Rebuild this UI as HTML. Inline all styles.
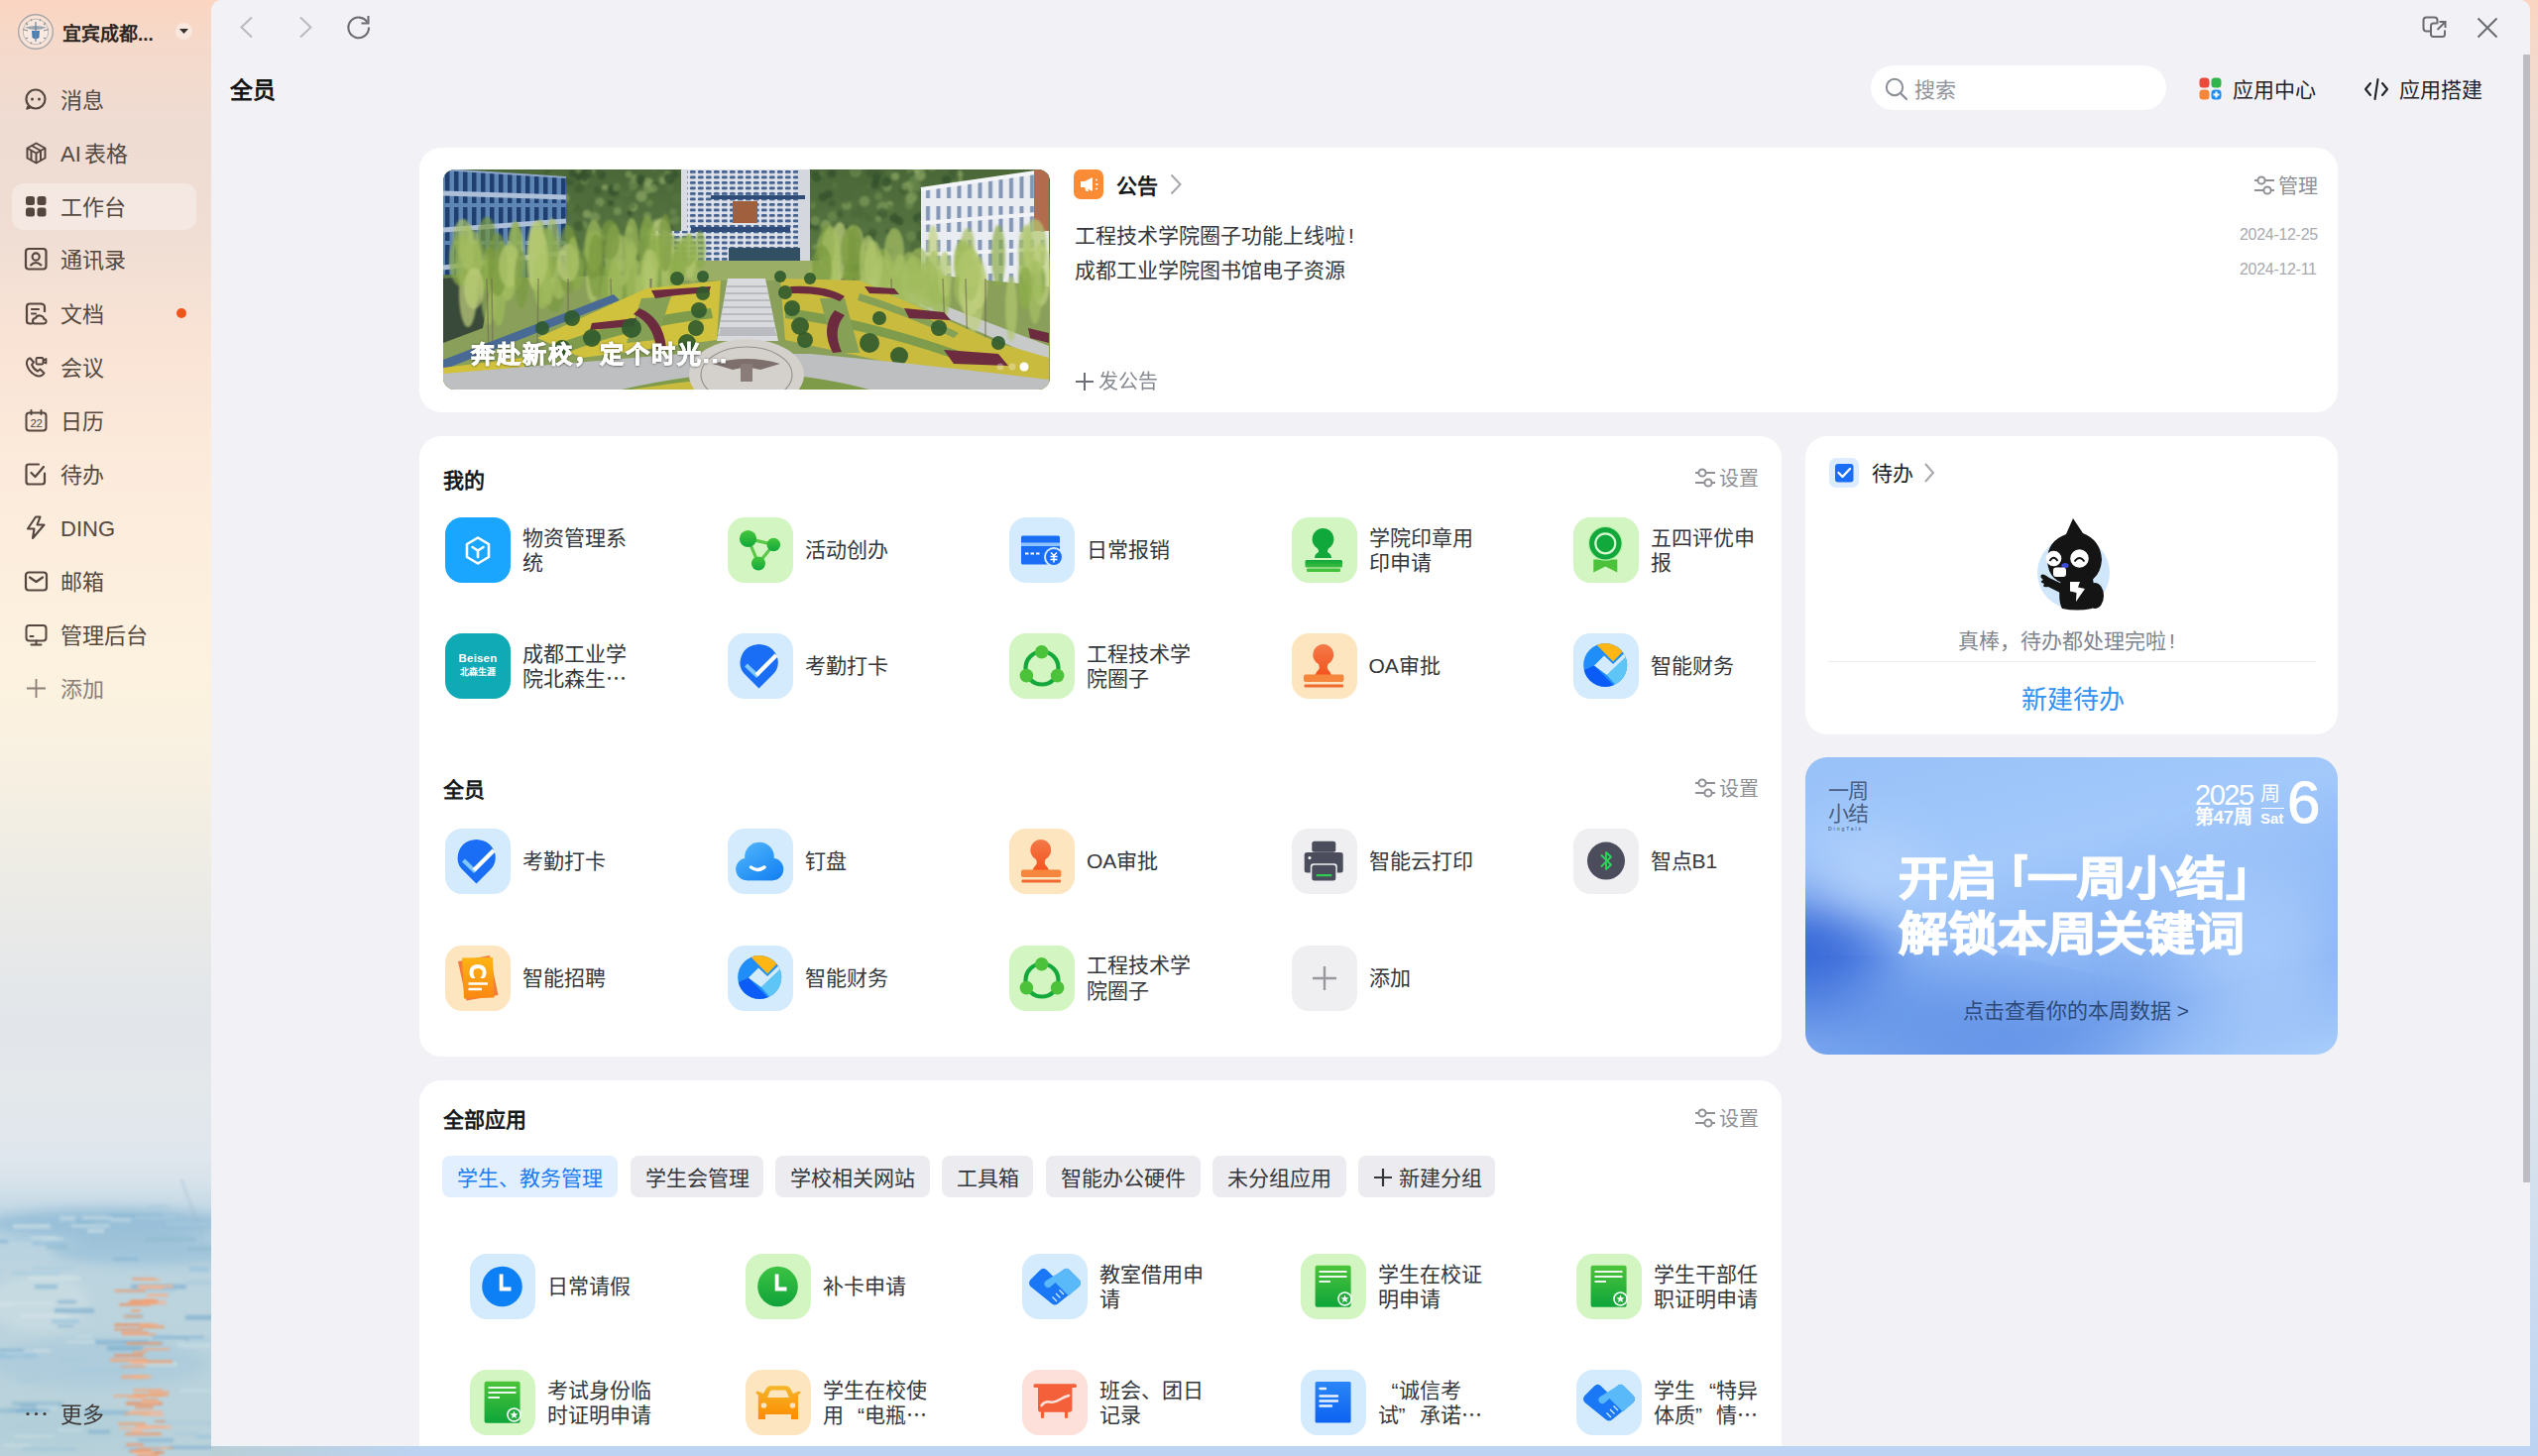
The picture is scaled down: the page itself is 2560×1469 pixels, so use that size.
<!DOCTYPE html>
<html lang="zh-CN">
<head>
<meta charset="utf-8">
<style>
*{box-sizing:border-box;margin:0;padding:0}
html,body{width:2560px;height:1469px;overflow:hidden}
body{font-family:"Liberation Sans",sans-serif;color:#1f2329;position:relative;background:#c3d6f4}
.abs{position:absolute}
#wall{position:absolute;left:0;top:0;width:2560px;height:1469px;background:linear-gradient(180deg,#fbd5c1 0px,#f5d9ca 45px,#eedcd3 130px,#f0ded4 240px,#f9e3d5 340px,#fcebdc 480px,#fdf2df 680px,#f7f0e2 780px,#eeece5 870px,#e6e8e9 970px,#dee4eb 1090px,#d4e0ee 1200px,#bcd3f3 1469px)}
#side{position:absolute;left:0;top:0;width:213px;height:1469px}
.nav{position:absolute;left:24px;height:30px;font-size:22px;line-height:30px;color:#55493f;white-space:nowrap}
.nav svg{position:absolute;left:0;top:1px}
.nav span{position:absolute;left:37px;top:0}
#main{position:absolute;left:213px;top:0;width:2339px;height:1459px;background:#f2f2f6;border-radius:10px 10px 0 0;overflow:hidden}
.card{position:absolute;background:#fff;border-radius:22px}
.t{position:absolute;white-space:nowrap}
.app{position:absolute;width:270px;height:66px}
.ic{position:absolute;left:0;top:0;width:66px;height:66px;border-radius:17px;overflow:hidden}
.ic svg{position:absolute;left:0;top:0}
.lb{position:absolute;left:78px;top:0;height:66px;width:130px;display:flex;align-items:center;font-size:21px;line-height:25.5px;color:#34373c}
.ell{letter-spacing:0}
.ql{display:inline-block;width:1em;text-align:right}
.qr{display:inline-block;width:1em;text-align:left}
.tab{position:absolute;top:1166px;height:42px;border-radius:8px;background:#ececf0;font-size:21px;line-height:46px;color:#34373c;text-align:center}
</style>
</head>
<body>
<div id="wall"></div>

<div id="side">
 <!-- logo -->
 <svg class="abs" style="left:17px;top:13px" width="38" height="38" viewBox="0 0 38 38">
  <circle cx="19" cy="19" r="17.3" fill="rgba(255,255,255,0.28)" stroke="#a9a7a8" stroke-width="1.4"/>
  <circle cx="19" cy="19" r="12.8" fill="rgba(255,255,255,0.25)" stroke="#bdb8b8" stroke-width="1"/>
  <path d="M6 16.5 L11 18 M27 18 L32 16.5 M9 10 L11 12 M29 10 L27 12 M14 6.5 L15 8 M24 6.5 L23 8 M9 26 L11 25 M29 26 L27 25 M14 31 L15 29.5 M24 31 L23 29.5" stroke="#8d8a8c" stroke-width="1.3"/>
  <path d="M8 14.5 Q19 11.5 30 14.5 Q25 17 19 17 Q13 17 8 14.5Z" fill="#9ba6b0"/>
  <path d="M15 18 L23 18 L22.5 25 Q19 27.5 15.5 25 Z" fill="#4a7fb6"/>
  <path d="M19 9 L19 29" stroke="#6d8aa6" stroke-width="1.3"/>
 </svg>
 <div class="t" style="left:63px;top:22px;font-size:19px;line-height:26px;font-weight:bold;color:#2c2420">宜宾成都...</div>
 <div class="abs" style="left:177px;top:23px;width:17px;height:17px;border-radius:50%;background:rgba(255,255,255,0.4)"></div>
 <svg class="abs" style="left:180px;top:28px" width="11" height="7" viewBox="0 0 11 7"><path d="M1 1 L10 1 L5.5 6Z" fill="#3a302b"/></svg>
 <div class="abs" style="left:12px;top:185px;width:186px;height:47px;border-radius:12px;background:rgba(255,255,255,0.32)"></div>
 <div class="nav" style="top:87px"><svg width="25" height="25" viewBox="0 0 25 25"><circle cx="12" cy="12" r="9.5" fill="none" stroke="#54463f" stroke-width="2.2"/><path d="M4 19 L3 22 L7 20.5" fill="#54463f" stroke="#54463f" stroke-width="1.5" stroke-linejoin="round"/><circle cx="8.5" cy="12" r="1.5" fill="#54463f"/><circle cx="15.5" cy="12" r="1.5" fill="#54463f"/></svg><span>消息</span></div>
 <div class="nav" style="top:141px"><svg width="25" height="25" viewBox="0 0 25 25"><path d="M12.5 2.5 L21.5 7.5 L21.5 17.5 L12.5 22.5 L3.5 17.5 L3.5 7.5 Z" fill="none" stroke="#54463f" stroke-width="2" stroke-linejoin="round"/><path d="M3.5 7.5 L12.5 12.5 L12.5 22.5 M12.5 12.5 L21.5 7.5 M8 5 L17 10 L17 20 M7.5 10 L7.5 20" fill="none" stroke="#54463f" stroke-width="2" stroke-linejoin="round"/></svg><span>AI<i style="font-style:normal;margin-left:3px">表格</i></span></div>
 <div class="nav" style="top:195px"><svg width="25" height="25" viewBox="0 0 25 25"><rect x="2" y="2" width="9" height="9" rx="2.5" fill="#54463f"/><rect x="13.5" y="2" width="9" height="9" rx="2.5" fill="#54463f"/><rect x="2" y="13.5" width="9" height="9" rx="2.5" fill="#54463f"/><rect x="13.5" y="13.5" width="9" height="9" rx="2.5" fill="#54463f"/></svg><span>工作台</span></div>
 <div class="nav" style="top:248px"><svg width="25" height="25" viewBox="0 0 25 25"><rect x="2" y="2" width="20.5" height="20.5" rx="3" fill="none" stroke="#54463f" stroke-width="2.2"/><circle cx="12.2" cy="10" r="3.6" fill="none" stroke="#54463f" stroke-width="2.1"/><path d="M6.5 19 Q12.2 13 18 19" fill="none" stroke="#54463f" stroke-width="2.1"/></svg><span>通讯录</span></div>
 <div class="nav" style="top:303px"><svg width="25" height="25" viewBox="0 0 25 25"><path d="M17 2.5 L6 2.5 Q3 2.5 3 5.5 L3 20 Q3 22.5 6 22.5 L8 22.5" fill="none" stroke="#54463f" stroke-width="2.2" stroke-linecap="round"/><path d="M17 2.5 Q21 2.5 21 6 L21 11" fill="none" stroke="#54463f" stroke-width="2.2"/><path d="M8 8 L15 8 M8 12.5 L12 12.5" stroke="#54463f" stroke-width="2.2" stroke-linecap="round"/><path d="M11 22.5 Q9 22.5 9 20 Q9 17 12 17 Q13 14 16.5 14.5 Q20 15 20.5 18 Q23 18.5 22.5 21 Q22 22.5 20 22.5 Z" fill="none" stroke="#54463f" stroke-width="2.1" stroke-linejoin="round"/></svg><span>文档</span></div>
 <div class="nav" style="top:357px"><svg width="25" height="25" viewBox="0 0 25 25"><path d="M5.5 3.5 Q2.5 5.5 3 9.5 Q4.5 16.5 11.5 20.5 Q15.5 22.5 18.5 20.5 L20.5 18.5 L16.5 14.5 L14 16.5 Q10 14.5 8 10 L10 7.5 L6.5 3.5 Z" fill="none" stroke="#54463f" stroke-width="2" stroke-linejoin="round"/><rect x="12.5" y="3" width="7" height="6.5" rx="1.2" fill="none" stroke="#54463f" stroke-width="1.9"/><path d="M19.5 5.5 L22.5 4 L22.5 8.5 L19.5 7" fill="none" stroke="#54463f" stroke-width="1.8" stroke-linejoin="round"/></svg><span>会议</span></div>
 <div class="nav" style="top:411px"><svg width="25" height="25" viewBox="0 0 25 25"><rect x="2.5" y="4.5" width="20" height="18" rx="3" fill="none" stroke="#54463f" stroke-width="2"/><path d="M7.5 2 L7.5 6 M17.5 2 L17.5 6" stroke="#54463f" stroke-width="2" stroke-linecap="round"/><text x="12.5" y="19" font-size="11.5" font-family="Liberation Sans" text-anchor="middle" fill="#54463f" letter-spacing="-0.5">22</text></svg><span>日历</span></div>
 <div class="nav" style="top:465px"><svg width="25" height="25" viewBox="0 0 25 25"><path d="M21 11.5 L21 20 Q21 22.5 18.5 22.5 L5 22.5 Q2.5 22.5 2.5 20 L2.5 5 Q2.5 2.5 5 2.5 L15 2.5" fill="none" stroke="#54463f" stroke-width="2.2" stroke-linecap="round"/><path d="M7.5 11 L11.5 15 L20 5" fill="none" stroke="#54463f" stroke-width="2.2" stroke-linecap="round" stroke-linejoin="round"/></svg><span>待办</span></div>
 <div class="nav" style="top:519px"><svg width="25" height="25" viewBox="0 0 25 25"><path d="M12 1.5 L16.5 1.5 L13.5 9.5 L20.5 9.5 L9 23 L10.5 13.5 L4 13.5 Z" fill="none" stroke="#54463f" stroke-width="2.1" stroke-linejoin="round"/></svg><span>DING</span></div>
 <div class="nav" style="top:573px"><svg width="25" height="25" viewBox="0 0 25 25"><rect x="2" y="3.5" width="21" height="18" rx="3" fill="none" stroke="#54463f" stroke-width="2.2"/><path d="M6 8.5 L12.5 13 L19 8.5" fill="none" stroke="#54463f" stroke-width="2.2" stroke-linecap="round" stroke-linejoin="round"/></svg><span>邮箱</span></div>
 <div class="nav" style="top:627px"><svg width="25" height="25" viewBox="0 0 25 25"><rect x="2.5" y="3" width="20" height="15.5" rx="3" fill="none" stroke="#54463f" stroke-width="2"/><path d="M7.5 22.5 L17.5 22.5 M12.5 18.5 L12.5 22.5 M6.5 14 L9.5 14" stroke="#54463f" stroke-width="2" stroke-linecap="round"/></svg><span>管理后台</span></div>
 <div class="nav" style="top:681px;color:#8a7e77"><svg width="25" height="25" viewBox="0 0 25 25"><path d="M12.5 3 L12.5 22 M3 12.5 L22 12.5" stroke="#8a7e77" stroke-width="1.8"/></svg><span>添加</span></div>
 <div class="abs" style="left:178px;top:311px;width:10px;height:10px;border-radius:50%;background:#f2541d"></div>
 <div id="paint" class="abs" style="left:0;top:1040px;width:213px;height:429px;overflow:hidden">
  <svg width="213" height="429" viewBox="0 0 213 429"><defs><linearGradient id="pg" x1="0" y1="0" x2="0" y2="1"><stop offset="0" stop-color="#e8e9ea" stop-opacity="0"/><stop offset="0.12" stop-color="#e4e8eb"/><stop offset="0.3" stop-color="#dfe6ed"/><stop offset="0.36" stop-color="#d6e2ea"/><stop offset="0.45" stop-color="#b9d3e2"/><stop offset="0.62" stop-color="#bcd4de"/><stop offset="1" stop-color="#b8d1da"/></linearGradient><filter id="pb"><feGaussianBlur stdDeviation="1.6"/></filter><filter id="pb2"><feGaussianBlur stdDeviation="6"/></filter><filter id="pb1"><feGaussianBlur stdDeviation="0.9"/></filter></defs><rect width="213" height="429" fill="url(#pg)"/><g filter="url(#pb2)" opacity="0.75"><ellipse cx="110" cy="195" rx="120" ry="16" fill="#8fbad5"/><ellipse cx="150" cy="222" rx="100" ry="14" fill="#98c0d8"/><ellipse cx="40" cy="275" rx="50" ry="30" fill="#cadde3"/><ellipse cx="100" cy="335" rx="110" ry="25" fill="#aacadb"/><ellipse cx="60" cy="400" rx="80" ry="20" fill="#b0cfd9"/></g><path d="M183 150 L205 210" stroke="#9fb9cc" stroke-width="3" opacity="0.35" filter="url(#pb)"/><g filter="url(#pb)"><rect x="13" y="246" width="44" height="2.2" fill="#c6dde5" opacity="0.6"/><rect x="108" y="185" width="56" height="2.6" fill="#7fb0d2" opacity="0.6"/><rect x="-5" y="275" width="19" height="3.3" fill="#d2e3e6" opacity="0.6"/><rect x="188" y="310" width="43" height="3.7" fill="#7fb0d2" opacity="0.6"/><rect x="67" y="313" width="59" height="2.1" fill="#d2e3e6" opacity="0.6"/><rect x="72" y="195" width="39" height="3.7" fill="#c6dde5" opacity="0.6"/><rect x="20" y="376" width="41" height="3.9" fill="#6fa6cc" opacity="0.6"/><rect x="137" y="186" width="40" height="3.9" fill="#a5c9de" opacity="0.6"/><rect x="74" y="340" width="29" height="3.8" fill="#a5c9de" opacity="0.6"/><rect x="35" y="256" width="23" height="4.3" fill="#7fb0d2" opacity="0.6"/><rect x="96" y="312" width="54" height="4.2" fill="#6fa6cc" opacity="0.6"/><rect x="-4" y="321" width="38" height="2.5" fill="#6fa6cc" opacity="0.6"/><rect x="88" y="200" width="17" height="4.0" fill="#d2e3e6" opacity="0.6"/><rect x="154" y="308" width="52" height="3.0" fill="#6fa6cc" opacity="0.6"/><rect x="108" y="318" width="36" height="4.5" fill="#6fa6cc" opacity="0.6"/><rect x="126" y="286" width="18" height="4.1" fill="#8fb9cf" opacity="0.6"/><rect x="130" y="313" width="35" height="4.1" fill="#8fb9cf" opacity="0.6"/><rect x="187" y="252" width="31" height="3.8" fill="#a5c9de" opacity="0.6"/><rect x="149" y="176" width="21" height="2.7" fill="#a5c9de" opacity="0.6"/><rect x="89" y="403" width="22" height="3.2" fill="#6fa6cc" opacity="0.6"/><rect x="160" y="394" width="54" height="2.8" fill="#a5c9de" opacity="0.6"/><rect x="130" y="421" width="32" height="2.7" fill="#7fb0d2" opacity="0.6"/><rect x="31" y="207" width="26" height="3.5" fill="#c6dde5" opacity="0.6"/><rect x="42" y="208" width="22" height="3.6" fill="#c6dde5" opacity="0.6"/><rect x="190" y="310" width="46" height="3.5" fill="#c6dde5" opacity="0.6"/><rect x="143" y="334" width="36" height="4.6" fill="#d2e3e6" opacity="0.6"/><rect x="103" y="340" width="33" height="3.2" fill="#a5c9de" opacity="0.6"/><rect x="-6" y="328" width="18" height="2.6" fill="#93bfda" opacity="0.6"/><rect x="112" y="189" width="20" height="3.7" fill="#c6dde5" opacity="0.6"/><rect x="60" y="187" width="16" height="4.6" fill="#c6dde5" opacity="0.6"/><rect x="120" y="260" width="58" height="3.8" fill="#a5c9de" opacity="0.6"/><rect x="167" y="193" width="60" height="3.4" fill="#a5c9de" opacity="0.6"/><rect x="12" y="243" width="49" height="4.2" fill="#a5c9de" opacity="0.6"/><rect x="16" y="380" width="16" height="4.9" fill="#c6dde5" opacity="0.6"/><rect x="132" y="256" width="56" height="4.3" fill="#6fa6cc" opacity="0.6"/><rect x="170" y="419" width="46" height="2.8" fill="#6fa6cc" opacity="0.6"/><rect x="58" y="401" width="25" height="3.6" fill="#c6dde5" opacity="0.6"/><rect x="29" y="247" width="52" height="5.0" fill="#d2e3e6" opacity="0.6"/><rect x="33" y="212" width="33" height="4.4" fill="#93bfda" opacity="0.6"/><rect x="58" y="297" width="16" height="2.1" fill="#6fa6cc" opacity="0.6"/><rect x="23" y="285" width="42" height="3.0" fill="#d2e3e6" opacity="0.6"/><rect x="197" y="408" width="58" height="3.1" fill="#93bfda" opacity="0.6"/><rect x="83" y="187" width="30" height="3.4" fill="#c6dde5" opacity="0.6"/><rect x="85" y="383" width="44" height="4.4" fill="#7fb0d2" opacity="0.6"/><rect x="6" y="381" width="32" height="4.1" fill="#93bfda" opacity="0.6"/><rect x="19" y="287" width="51" height="3.0" fill="#d2e3e6" opacity="0.6"/><rect x="139" y="411" width="36" height="4.2" fill="#7fb0d2" opacity="0.6"/><rect x="17" y="352" width="21" height="2.5" fill="#a5c9de" opacity="0.6"/><rect x="12" y="374" width="52" height="4.9" fill="#8fb9cf" opacity="0.6"/><rect x="14" y="408" width="40" height="2.1" fill="#d2e3e6" opacity="0.6"/><rect x="123" y="417" width="39" height="4.8" fill="#a5c9de" opacity="0.6"/><rect x="23" y="421" width="54" height="2.1" fill="#93bfda" opacity="0.6"/><rect x="33" y="238" width="41" height="2.8" fill="#a5c9de" opacity="0.6"/><rect x="-7" y="381" width="48" height="4.7" fill="#8fb9cf" opacity="0.6"/><rect x="179" y="315" width="34" height="4.8" fill="#c6dde5" opacity="0.6"/><rect x="13" y="195" width="38" height="4.6" fill="#d2e3e6" opacity="0.6"/><rect x="-19" y="209" width="51" height="2.5" fill="#a5c9de" opacity="0.6"/><rect x="6" y="324" width="18" height="4.0" fill="#c6dde5" opacity="0.6"/><rect x="153" y="307" width="20" height="3.7" fill="#93bfda" opacity="0.6"/><rect x="-11" y="211" width="19" height="3.4" fill="#7fb0d2" opacity="0.6"/><rect x="181" y="361" width="35" height="3.8" fill="#c6dde5" opacity="0.6"/><rect x="24" y="321" width="27" height="3.5" fill="#d2e3e6" opacity="0.6"/><rect x="187" y="287" width="46" height="4.6" fill="#6fa6cc" opacity="0.6"/><rect x="176" y="405" width="24" height="3.3" fill="#a5c9de" opacity="0.6"/><rect x="77" y="192" width="18" height="2.7" fill="#7fb0d2" opacity="0.6"/><rect x="47" y="216" width="21" height="4.3" fill="#8fb9cf" opacity="0.6"/><rect x="61" y="331" width="26" height="2.4" fill="#a5c9de" opacity="0.6"/><rect x="190" y="218" width="33" height="3.5" fill="#8fb9cf" opacity="0.6"/><rect x="16" y="381" width="34" height="3.5" fill="#6fa6cc" opacity="0.6"/><rect x="58" y="272" width="19" height="3.1" fill="#6fa6cc" opacity="0.6"/><rect x="77" y="307" width="16" height="3.0" fill="#c6dde5" opacity="0.6"/><rect x="191" y="238" width="20" height="4.8" fill="#93bfda" opacity="0.6"/><rect x="3" y="417" width="27" height="2.1" fill="#d2e3e6" opacity="0.6"/><rect x="146" y="208" width="52" height="4.5" fill="#8fb9cf" opacity="0.6"/><rect x="37" y="377" width="22" height="4.8" fill="#c6dde5" opacity="0.6"/><rect x="52" y="291" width="28" height="4.4" fill="#93bfda" opacity="0.6"/><rect x="-4" y="273" width="57" height="3.9" fill="#d2e3e6" opacity="0.6"/><rect x="114" y="229" width="25" height="2.8" fill="#7fb0d2" opacity="0.6"/><rect x="55" y="280" width="40" height="4.8" fill="#6fa6cc" opacity="0.6"/><rect x="-10" y="325" width="47" height="4.8" fill="#93bfda" opacity="0.6"/></g><g filter="url(#pb1)"><rect x="115" y="295" width="38" height="3.6" rx="1.5" fill="#e98f62" opacity="0.7"/><rect x="125" y="385" width="25" height="2.4" rx="1.5" fill="#f0a070" opacity="0.7"/><rect x="156" y="393" width="11" height="2.0" rx="1.5" fill="#e98f62" opacity="0.7"/><rect x="122" y="347" width="24" height="4.3" rx="1.5" fill="#f2a77c" opacity="0.7"/><rect x="135" y="366" width="30" height="3.4" rx="1.5" fill="#f5b088" opacity="0.7"/><rect x="130" y="423" width="16" height="2.6" rx="1.5" fill="#ee9a6e" opacity="0.7"/><rect x="137" y="398" width="29" height="3.0" rx="1.5" fill="#f0a070" opacity="0.7"/><rect x="151" y="425" width="10" height="3.6" rx="1.5" fill="#f0a070" opacity="0.7"/><rect x="115" y="326" width="30" height="3.0" rx="1.5" fill="#e98f62" opacity="0.7"/><rect x="129" y="369" width="17" height="2.7" rx="1.5" fill="#f5b088" opacity="0.7"/><rect x="132" y="281" width="10" height="2.9" rx="1.5" fill="#f0a070" opacity="0.7"/><rect x="138" y="423" width="17" height="4.4" rx="1.5" fill="#f0a070" opacity="0.7"/><rect x="124" y="287" width="20" height="2.2" rx="1.5" fill="#f0a070" opacity="0.7"/><rect x="122" y="338" width="25" height="2.0" rx="1.5" fill="#f0a070" opacity="0.7"/><rect x="119" y="395" width="28" height="3.0" rx="1.5" fill="#f0a070" opacity="0.7"/><rect x="122" y="303" width="28" height="3.3" rx="1.5" fill="#ee9a6e" opacity="0.7"/><rect x="134" y="366" width="36" height="3.0" rx="1.5" fill="#f0a070" opacity="0.7"/><rect x="136" y="378" width="19" height="3.5" rx="1.5" fill="#ee9a6e" opacity="0.7"/><rect x="138" y="256" width="37" height="3.6" rx="1.5" fill="#f3b696" opacity="0.7"/><rect x="127" y="374" width="37" height="3.9" rx="1.5" fill="#e98f62" opacity="0.7"/><rect x="138" y="398" width="35" height="3.5" rx="1.5" fill="#f3b696" opacity="0.7"/><rect x="143" y="371" width="17" height="2.1" rx="1.5" fill="#ee9a6e" opacity="0.7"/><rect x="150" y="363" width="21" height="3.1" rx="1.5" fill="#f2a77c" opacity="0.7"/><rect x="134" y="361" width="30" height="3.2" rx="1.5" fill="#f2a77c" opacity="0.7"/><rect x="111" y="330" width="38" height="4.2" rx="1.5" fill="#f2a77c" opacity="0.7"/><rect x="114" y="367" width="32" height="2.6" rx="1.5" fill="#f2a77c" opacity="0.7"/><rect x="120" y="400" width="33" height="2.6" rx="1.5" fill="#f3b696" opacity="0.7"/><rect x="134" y="424" width="21" height="3.2" rx="1.5" fill="#f3b696" opacity="0.7"/><rect x="115" y="300" width="29" height="2.5" rx="1.5" fill="#e98f62" opacity="0.7"/><rect x="120" y="275" width="32" height="2.8" rx="1.5" fill="#e98f62" opacity="0.7"/><rect x="132" y="272" width="25" height="4.4" rx="1.5" fill="#f2a77c" opacity="0.7"/><rect x="142" y="373" width="19" height="3.3" rx="1.5" fill="#f5b088" opacity="0.7"/><rect x="134" y="332" width="40" height="3.4" rx="1.5" fill="#f0a070" opacity="0.7"/><rect x="155" y="424" width="11" height="3.1" rx="1.5" fill="#e98f62" opacity="0.7"/><rect x="134" y="422" width="18" height="2.5" rx="1.5" fill="#ee9a6e" opacity="0.7"/><rect x="115" y="261" width="32" height="2.7" rx="1.5" fill="#f0a070" opacity="0.7"/><rect x="143" y="272" width="25" height="4.2" rx="1.5" fill="#f3b696" opacity="0.7"/><rect x="127" y="314" width="36" height="3.0" rx="1.5" fill="#ee9a6e" opacity="0.7"/><rect x="133" y="249" width="24" height="2.8" rx="1.5" fill="#ee9a6e" opacity="0.7"/><rect x="134" y="323" width="14" height="2.8" rx="1.5" fill="#f0a070" opacity="0.7"/><rect x="150" y="383" width="14" height="4.3" rx="1.5" fill="#f3b696" opacity="0.7"/><rect x="144" y="250" width="18" height="2.2" rx="1.5" fill="#f5b088" opacity="0.7"/><rect x="138" y="428" width="21" height="3.1" rx="1.5" fill="#f0a070" opacity="0.7"/><rect x="132" y="402" width="12" height="3.7" rx="1.5" fill="#f3b696" opacity="0.7"/><rect x="127" y="416" width="18" height="3.3" rx="1.5" fill="#ee9a6e" opacity="0.7"/><rect x="143" y="387" width="23" height="2.1" rx="1.5" fill="#f3b696" opacity="0.7"/><rect x="144" y="320" width="27" height="2.5" rx="1.5" fill="#f2a77c" opacity="0.7"/><rect x="141" y="257" width="24" height="3.9" rx="1.5" fill="#f3b696" opacity="0.7"/><rect x="126" y="405" width="37" height="3.4" rx="1.5" fill="#ee9a6e" opacity="0.7"/><rect x="130" y="333" width="19" height="3.8" rx="1.5" fill="#f3b696" opacity="0.7"/><rect x="141" y="295" width="19" height="3.4" rx="1.5" fill="#f5b088" opacity="0.7"/><rect x="144" y="270" width="12" height="3.3" rx="1.5" fill="#f5b088" opacity="0.7"/><rect x="133" y="347" width="20" height="3.9" rx="1.5" fill="#f5b088" opacity="0.7"/><rect x="128" y="273" width="13" height="2.9" rx="1.5" fill="#f2a77c" opacity="0.7"/><rect x="123" y="305" width="34" height="2.5" rx="1.5" fill="#f2a77c" opacity="0.7"/><rect x="131" y="383" width="22" height="3.3" rx="1.5" fill="#f5b088" opacity="0.7"/><rect x="141" y="297" width="25" height="3.4" rx="1.5" fill="#f0a070" opacity="0.7"/><rect x="131" y="271" width="29" height="4.2" rx="1.5" fill="#ee9a6e" opacity="0.7"/><rect x="148" y="265" width="22" height="3.6" rx="1.5" fill="#f5b088" opacity="0.7"/><rect x="139" y="420" width="36" height="2.1" rx="1.5" fill="#f2a77c" opacity="0.7"/></g></svg>
 </div>
 <div class="nav" style="top:1413px;color:#3f3a38"><svg width="25" height="25" viewBox="0 0 25 25"><circle cx="4" cy="12.5" r="1.6" fill="#3f3a38"/><circle cx="12.5" cy="12.5" r="1.6" fill="#3f3a38"/><circle cx="21" cy="12.5" r="1.6" fill="#3f3a38"/></svg><span>更多</span></div>
</div>

<div class="abs" style="left:213px;top:1459px;width:220px;height:10px;background:linear-gradient(90deg,#b9cfd6,#bcd3f3)"></div>
<div id="main"><div class="abs" style="left:-213px;top:0;width:2560px;height:1469px">
 <!-- nav -->
 <svg class="abs" style="left:240px;top:15px" width="18" height="25" viewBox="0 0 18 25"><path d="M14 2.5 L3.5 12.5 L14 22.5" fill="none" stroke="#b9b9c0" stroke-width="2"/></svg>
 <svg class="abs" style="left:299px;top:15px" width="18" height="25" viewBox="0 0 18 25"><path d="M4 2.5 L14.5 12.5 L4 22.5" fill="none" stroke="#b9b9c0" stroke-width="2"/></svg>
 <svg class="abs" style="left:348px;top:14px" width="27" height="27" viewBox="0 0 27 27"><path d="M22.5 8.5 A10.3 10.3 0 1 0 24 13.5" fill="none" stroke="#6b6b72" stroke-width="2.1"/><path d="M23.5 2 L23.5 9.5 L16.5 9.5" fill="none" stroke="#6b6b72" stroke-width="2.1"/></svg>
 <div class="t" style="left:232px;top:76px;font-size:23px;line-height:30px;font-weight:bold;color:#141414">全员</div>
 <!-- search -->
 <div class="abs" style="left:1887px;top:66px;width:298px;height:45px;border-radius:23px;background:#fff"></div>
 <svg class="abs" style="left:1900px;top:77px" width="26" height="26" viewBox="0 0 26 26"><circle cx="11" cy="11" r="8.2" fill="none" stroke="#8a8f98" stroke-width="2"/><path d="M17 17 L23 23" stroke="#8a8f98" stroke-width="2.2" stroke-linecap="round"/></svg>
 <div class="t" style="left:1931px;top:76px;font-size:21px;line-height:30px;color:#8f9299">搜索</div>
 <!-- app center -->
 <svg class="abs" style="left:2218px;top:78px" width="24" height="24" viewBox="0 0 24 24"><rect x="0.5" y="0.5" width="10" height="10" rx="3.5" fill="#e94b3c"/><rect x="12.5" y="0.5" width="10" height="10" rx="3.5" fill="#2fb54a"/><rect x="0.5" y="12.5" width="10" height="10" rx="3.5" fill="#f5863a"/><rect x="12.5" y="12.5" width="10" height="10" rx="3.5" fill="#1d8df3"/><path d="M17.5 14.5 L17.5 20.5 M14.5 17.5 L20.5 17.5" stroke="#fff" stroke-width="2"/></svg>
 <div class="t" style="left:2252px;top:76px;font-size:21px;line-height:30px;color:#1f2329">应用中心</div>
 <svg class="abs" style="left:2383px;top:77px" width="28" height="26" viewBox="0 0 28 26"><path d="M8 7 L3 13 L8 19 M20 7 L25 13 L20 19 M15.5 3 L12.5 23" fill="none" stroke="#1f2329" stroke-width="2.1" stroke-linecap="round" stroke-linejoin="round"/></svg>
 <div class="t" style="left:2420px;top:76px;font-size:21px;line-height:30px;color:#1f2329">应用搭建</div>
 <!-- window btns -->
 <svg class="abs" style="left:2442px;top:15px" width="28" height="25" viewBox="0 0 28 25"><rect x="2.5" y="2.5" width="14" height="14" rx="3" fill="none" stroke="#6b6b72" stroke-width="2"/><path d="M16.5 8.5 L12.5 8.5 Q10 8.5 10 11 L10 19.5 Q10 22 12.5 22 L21.5 22 Q24 22 24 19.5 L24 15.5" fill="#f2f2f6" stroke="#6b6b72" stroke-width="2"/><path d="M16.5 15 L23.5 8 M18.5 7 L24.5 7 L24.5 13" fill="none" stroke="#6b6b72" stroke-width="2"/></svg>
 <svg class="abs" style="left:2497px;top:16px" width="24" height="24" viewBox="0 0 24 24"><path d="M2.5 2.5 L21.5 21.5 M21.5 2.5 L2.5 21.5" stroke="#6b6b72" stroke-width="2"/></svg>
 <!-- scrollbar -->
 <div class="abs" style="left:2545px;top:55px;width:7px;height:1138px;background:#bcbcc2;border-radius:1px"></div>

 <!-- banner card -->
 <div class="card" style="left:423px;top:149px;width:1935px;height:267px"></div>
 <div id="banner" class="abs" style="left:447px;top:171px;width:612px;height:222px;border-radius:12px;overflow:hidden;background:#6a8a5a"><svg width="612" height="222" viewBox="0 0 612 222"><defs><linearGradient id="mt" x1="0" y1="0" x2="0" y2="1"><stop offset="0" stop-color="#4a6838"/><stop offset="0.6" stop-color="#62804a"/><stop offset="1" stop-color="#90a862"/></linearGradient><pattern id="perf" width="8" height="5.5" patternUnits="userSpaceOnUse"><rect width="8" height="5.5" fill="#dfe2e8"/><rect x="0.8" y="1" width="6" height="3" rx="1.4" fill="#46638f"/></pattern><pattern id="winL" width="9" height="38" patternUnits="userSpaceOnUse"><rect width="9" height="38" fill="#5d86b4"/><rect x="2" y="0" width="4.5" height="34" fill="#1f3f70"/></pattern><pattern id="winR" width="10.5" height="34" patternUnits="userSpaceOnUse"><rect width="10.5" height="34" fill="#e9ecf1"/><rect x="4" y="3" width="4" height="26" fill="#8396b6"/></pattern><filter id="soft"><feGaussianBlur stdDeviation="0.8"/></filter><filter id="soft2"><feGaussianBlur stdDeviation="2.5"/></filter></defs><rect width="612" height="222" fill="url(#mt)"/><g filter="url(#soft)"><circle cx="293" cy="54" r="5.7" fill="#33502c" opacity="0.75"/><circle cx="293" cy="83" r="3.2" fill="#4c6a3a" opacity="0.75"/><circle cx="317" cy="61" r="5.3" fill="#3f5c32" opacity="0.75"/><circle cx="290" cy="11" r="4.4" fill="#8ba563" opacity="0.75"/><circle cx="368" cy="57" r="3.9" fill="#33502c" opacity="0.75"/><circle cx="376" cy="59" r="3.1" fill="#3f5c32" opacity="0.75"/><circle cx="450" cy="3" r="2.6" fill="#557440" opacity="0.75"/><circle cx="354" cy="76" r="3.6" fill="#7b9858" opacity="0.75"/><circle cx="455" cy="49" r="4.7" fill="#33502c" opacity="0.75"/><circle cx="107" cy="6" r="4.8" fill="#33502c" opacity="0.75"/><circle cx="519" cy="98" r="5.4" fill="#8ba563" opacity="0.75"/><circle cx="210" cy="74" r="4.3" fill="#3f5c32" opacity="0.75"/><circle cx="134" cy="74" r="3.9" fill="#4c6a3a" opacity="0.75"/><circle cx="226" cy="4" r="2.6" fill="#8ba563" opacity="0.75"/><circle cx="105" cy="18" r="5.7" fill="#33502c" opacity="0.75"/><circle cx="261" cy="69" r="4.0" fill="#7b9858" opacity="0.75"/><circle cx="366" cy="76" r="3.4" fill="#3f5c32" opacity="0.75"/><circle cx="234" cy="-1" r="3.9" fill="#3f5c32" opacity="0.75"/><circle cx="161" cy="68" r="2.5" fill="#33502c" opacity="0.75"/><circle cx="436" cy="15" r="4.5" fill="#33502c" opacity="0.75"/><circle cx="316" cy="97" r="5.2" fill="#33502c" opacity="0.75"/><circle cx="372" cy="9" r="4.0" fill="#557440" opacity="0.75"/><circle cx="105" cy="84" r="5.9" fill="#7b9858" opacity="0.75"/><circle cx="231" cy="86" r="3.2" fill="#33502c" opacity="0.75"/><circle cx="518" cy="58" r="4.5" fill="#3f5c32" opacity="0.75"/><circle cx="516" cy="19" r="3.4" fill="#4c6a3a" opacity="0.75"/><circle cx="358" cy="81" r="3.9" fill="#3f5c32" opacity="0.75"/><circle cx="142" cy="56" r="3.4" fill="#7b9858" opacity="0.75"/><circle cx="258" cy="60" r="2.9" fill="#7b9858" opacity="0.75"/><circle cx="306" cy="55" r="5.5" fill="#557440" opacity="0.75"/><circle cx="365" cy="28" r="3.3" fill="#7b9858" opacity="0.75"/><circle cx="209" cy="16" r="5.1" fill="#7b9858" opacity="0.75"/><circle cx="187" cy="93" r="5.6" fill="#7b9858" opacity="0.75"/><circle cx="138" cy="2" r="2.9" fill="#7b9858" opacity="0.75"/><circle cx="505" cy="21" r="5.0" fill="#6a8a4e" opacity="0.75"/><circle cx="280" cy="88" r="4.2" fill="#7b9858" opacity="0.75"/><circle cx="178" cy="70" r="2.7" fill="#557440" opacity="0.75"/><circle cx="304" cy="63" r="4.7" fill="#3f5c32" opacity="0.75"/><circle cx="221" cy="90" r="3.2" fill="#3f5c32" opacity="0.75"/><circle cx="134" cy="39" r="3.4" fill="#3f5c32" opacity="0.75"/><circle cx="178" cy="34" r="4.5" fill="#557440" opacity="0.75"/><circle cx="143" cy="11" r="4.1" fill="#6a8a4e" opacity="0.75"/><circle cx="378" cy="67" r="4.5" fill="#557440" opacity="0.75"/><circle cx="350" cy="90" r="4.2" fill="#6a8a4e" opacity="0.75"/><circle cx="396" cy="94" r="2.6" fill="#8ba563" opacity="0.75"/><circle cx="136" cy="4" r="3.6" fill="#557440" opacity="0.75"/><circle cx="520" cy="5" r="4.4" fill="#8ba563" opacity="0.75"/><circle cx="123" cy="92" r="5.1" fill="#557440" opacity="0.75"/><circle cx="434" cy="89" r="3.7" fill="#8ba563" opacity="0.75"/><circle cx="301" cy="5" r="5.5" fill="#4c6a3a" opacity="0.75"/><circle cx="118" cy="47" r="2.6" fill="#8ba563" opacity="0.75"/><circle cx="264" cy="56" r="4.6" fill="#3f5c32" opacity="0.75"/><circle cx="143" cy="9" r="3.4" fill="#33502c" opacity="0.75"/><circle cx="407" cy="36" r="5.1" fill="#7b9858" opacity="0.75"/><circle cx="295" cy="44" r="4.4" fill="#7b9858" opacity="0.75"/><circle cx="416" cy="0" r="4.6" fill="#33502c" opacity="0.75"/><circle cx="114" cy="94" r="2.9" fill="#4c6a3a" opacity="0.75"/><circle cx="360" cy="90" r="3.4" fill="#3f5c32" opacity="0.75"/><circle cx="258" cy="11" r="4.6" fill="#7b9858" opacity="0.75"/><circle cx="175" cy="88" r="4.8" fill="#33502c" opacity="0.75"/><circle cx="312" cy="21" r="3.9" fill="#6a8a4e" opacity="0.75"/><circle cx="187" cy="41" r="5.3" fill="#557440" opacity="0.75"/><circle cx="470" cy="36" r="4.5" fill="#6a8a4e" opacity="0.75"/><circle cx="192" cy="11" r="3.7" fill="#4c6a3a" opacity="0.75"/><circle cx="122" cy="3" r="5.9" fill="#4c6a3a" opacity="0.75"/><circle cx="175" cy="43" r="3.5" fill="#557440" opacity="0.75"/><circle cx="450" cy="36" r="4.3" fill="#8ba563" opacity="0.75"/><circle cx="236" cy="82" r="5.9" fill="#33502c" opacity="0.75"/><circle cx="238" cy="81" r="3.5" fill="#7b9858" opacity="0.75"/><circle cx="122" cy="69" r="4.5" fill="#6a8a4e" opacity="0.75"/><circle cx="374" cy="54" r="4.7" fill="#33502c" opacity="0.75"/><circle cx="294" cy="-1" r="5.4" fill="#557440" opacity="0.75"/><circle cx="428" cy="77" r="5.9" fill="#3f5c32" opacity="0.75"/><circle cx="290" cy="61" r="4.8" fill="#4c6a3a" opacity="0.75"/><circle cx="258" cy="5" r="3.2" fill="#4c6a3a" opacity="0.75"/><circle cx="302" cy="15" r="2.5" fill="#33502c" opacity="0.75"/><circle cx="327" cy="1" r="3.3" fill="#4c6a3a" opacity="0.75"/><circle cx="248" cy="67" r="4.3" fill="#7b9858" opacity="0.75"/><circle cx="519" cy="13" r="5.5" fill="#8ba563" opacity="0.75"/><circle cx="481" cy="6" r="5.8" fill="#8ba563" opacity="0.75"/><circle cx="266" cy="43" r="3.2" fill="#3f5c32" opacity="0.75"/><circle cx="261" cy="54" r="5.6" fill="#4c6a3a" opacity="0.75"/><circle cx="445" cy="32" r="3.6" fill="#557440" opacity="0.75"/><circle cx="146" cy="84" r="5.3" fill="#8ba563" opacity="0.75"/><circle cx="156" cy="21" r="3.9" fill="#3f5c32" opacity="0.75"/><circle cx="511" cy="51" r="5.3" fill="#6a8a4e" opacity="0.75"/><circle cx="214" cy="70" r="2.6" fill="#7b9858" opacity="0.75"/><circle cx="139" cy="42" r="4.4" fill="#4c6a3a" opacity="0.75"/><circle cx="219" cy="90" r="3.3" fill="#4c6a3a" opacity="0.75"/><circle cx="132" cy="78" r="3.1" fill="#6a8a4e" opacity="0.75"/><circle cx="390" cy="90" r="4.1" fill="#7b9858" opacity="0.75"/><circle cx="479" cy="49" r="4.9" fill="#33502c" opacity="0.75"/><circle cx="497" cy="47" r="5.8" fill="#3f5c32" opacity="0.75"/><circle cx="420" cy="41" r="4.5" fill="#4c6a3a" opacity="0.75"/><circle cx="407" cy="62" r="4.3" fill="#4c6a3a" opacity="0.75"/><circle cx="481" cy="23" r="4.8" fill="#4c6a3a" opacity="0.75"/><circle cx="466" cy="59" r="3.6" fill="#557440" opacity="0.75"/><circle cx="507" cy="50" r="4.5" fill="#557440" opacity="0.75"/><circle cx="276" cy="9" r="2.5" fill="#33502c" opacity="0.75"/><circle cx="117" cy="95" r="4.3" fill="#33502c" opacity="0.75"/><circle cx="331" cy="97" r="2.9" fill="#3f5c32" opacity="0.75"/><circle cx="392" cy="4" r="4.4" fill="#33502c" opacity="0.75"/><circle cx="487" cy="78" r="3.9" fill="#557440" opacity="0.75"/><circle cx="301" cy="10" r="4.0" fill="#4c6a3a" opacity="0.75"/><circle cx="493" cy="90" r="4.3" fill="#3f5c32" opacity="0.75"/><circle cx="184" cy="59" r="5.7" fill="#557440" opacity="0.75"/><circle cx="396" cy="96" r="2.6" fill="#557440" opacity="0.75"/><circle cx="199" cy="66" r="3.6" fill="#6a8a4e" opacity="0.75"/><circle cx="206" cy="47" r="4.2" fill="#7b9858" opacity="0.75"/><circle cx="156" cy="49" r="3.4" fill="#557440" opacity="0.75"/><circle cx="396" cy="86" r="2.6" fill="#8ba563" opacity="0.75"/><circle cx="277" cy="50" r="3.1" fill="#557440" opacity="0.75"/><circle cx="463" cy="51" r="3.3" fill="#557440" opacity="0.75"/><circle cx="458" cy="59" r="5.5" fill="#557440" opacity="0.75"/><circle cx="485" cy="60" r="3.7" fill="#557440" opacity="0.75"/><circle cx="236" cy="29" r="5.7" fill="#557440" opacity="0.75"/><circle cx="428" cy="17" r="2.8" fill="#557440" opacity="0.75"/><circle cx="160" cy="6" r="3.9" fill="#33502c" opacity="0.75"/><circle cx="450" cy="40" r="5.3" fill="#557440" opacity="0.75"/><circle cx="188" cy="60" r="5.3" fill="#3f5c32" opacity="0.75"/><circle cx="188" cy="66" r="5.7" fill="#6a8a4e" opacity="0.75"/><circle cx="153" cy="48" r="5.2" fill="#7b9858" opacity="0.75"/><circle cx="519" cy="81" r="5.3" fill="#33502c" opacity="0.75"/><circle cx="149" cy="1" r="4.4" fill="#7b9858" opacity="0.75"/><circle cx="481" cy="46" r="3.2" fill="#3f5c32" opacity="0.75"/><circle cx="190" cy="82" r="6.0" fill="#8ba563" opacity="0.75"/><circle cx="145" cy="3" r="5.8" fill="#33502c" opacity="0.75"/><circle cx="137" cy="7" r="3.9" fill="#33502c" opacity="0.75"/><circle cx="319" cy="40" r="4.6" fill="#3f5c32" opacity="0.75"/><circle cx="368" cy="1" r="3.2" fill="#33502c" opacity="0.75"/><circle cx="293" cy="72" r="3.9" fill="#557440" opacity="0.75"/><circle cx="356" cy="7" r="5.3" fill="#6a8a4e" opacity="0.75"/><circle cx="476" cy="78" r="5.0" fill="#4c6a3a" opacity="0.75"/><circle cx="482" cy="92" r="4.5" fill="#557440" opacity="0.75"/><circle cx="314" cy="96" r="5.3" fill="#6a8a4e" opacity="0.75"/><circle cx="221" cy="9" r="5.1" fill="#557440" opacity="0.75"/><circle cx="443" cy="38" r="5.6" fill="#7b9858" opacity="0.75"/><circle cx="393" cy="74" r="5.2" fill="#33502c" opacity="0.75"/><circle cx="191" cy="16" r="5.3" fill="#6a8a4e" opacity="0.75"/><circle cx="300" cy="-2" r="3.7" fill="#8ba563" opacity="0.75"/><circle cx="480" cy="2" r="3.5" fill="#8ba563" opacity="0.75"/><circle cx="229" cy="19" r="3.9" fill="#557440" opacity="0.75"/><circle cx="326" cy="36" r="6.0" fill="#8ba563" opacity="0.75"/><circle cx="193" cy="9" r="3.9" fill="#7b9858" opacity="0.75"/><circle cx="114" cy="59" r="5.1" fill="#6a8a4e" opacity="0.75"/><circle cx="289" cy="48" r="5.2" fill="#8ba563" opacity="0.75"/><circle cx="261" cy="7" r="3.4" fill="#6a8a4e" opacity="0.75"/><circle cx="333" cy="48" r="5.9" fill="#7b9858" opacity="0.75"/><circle cx="456" cy="7" r="4.1" fill="#8ba563" opacity="0.75"/><circle cx="137" cy="57" r="5.2" fill="#3f5c32" opacity="0.75"/><circle cx="265" cy="92" r="3.9" fill="#557440" opacity="0.75"/><circle cx="460" cy="52" r="4.6" fill="#33502c" opacity="0.75"/><circle cx="497" cy="39" r="4.3" fill="#7b9858" opacity="0.75"/><circle cx="235" cy="51" r="4.2" fill="#6a8a4e" opacity="0.75"/><circle cx="338" cy="26" r="5.0" fill="#6a8a4e" opacity="0.75"/><circle cx="116" cy="75" r="4.6" fill="#8ba563" opacity="0.75"/><circle cx="170" cy="73" r="3.9" fill="#6a8a4e" opacity="0.75"/><circle cx="416" cy="2" r="6.0" fill="#6a8a4e" opacity="0.75"/><circle cx="136" cy="88" r="4.0" fill="#33502c" opacity="0.75"/><circle cx="209" cy="73" r="2.7" fill="#3f5c32" opacity="0.75"/><circle cx="494" cy="70" r="4.1" fill="#4c6a3a" opacity="0.75"/><circle cx="207" cy="68" r="2.7" fill="#33502c" opacity="0.75"/><circle cx="294" cy="18" r="2.7" fill="#7b9858" opacity="0.75"/><circle cx="169" cy="34" r="3.0" fill="#33502c" opacity="0.75"/><circle cx="294" cy="23" r="4.5" fill="#33502c" opacity="0.75"/><circle cx="256" cy="72" r="5.4" fill="#557440" opacity="0.75"/><circle cx="500" cy="71" r="3.3" fill="#3f5c32" opacity="0.75"/><circle cx="314" cy="28" r="4.3" fill="#4c6a3a" opacity="0.75"/><circle cx="254" cy="24" r="4.9" fill="#7b9858" opacity="0.75"/><circle cx="395" cy="16" r="3.5" fill="#557440" opacity="0.75"/><circle cx="184" cy="22" r="5.9" fill="#557440" opacity="0.75"/><circle cx="470" cy="1" r="2.7" fill="#6a8a4e" opacity="0.75"/><circle cx="213" cy="-0" r="2.6" fill="#557440" opacity="0.75"/><circle cx="330" cy="4" r="2.8" fill="#8ba563" opacity="0.75"/><circle cx="172" cy="21" r="5.9" fill="#33502c" opacity="0.75"/><circle cx="304" cy="18" r="3.7" fill="#8ba563" opacity="0.75"/><circle cx="160" cy="85" r="5.3" fill="#33502c" opacity="0.75"/><circle cx="441" cy="60" r="5.2" fill="#557440" opacity="0.75"/><circle cx="289" cy="72" r="3.9" fill="#557440" opacity="0.75"/><circle cx="258" cy="63" r="6.0" fill="#6a8a4e" opacity="0.75"/><circle cx="226" cy="74" r="5.4" fill="#557440" opacity="0.75"/><circle cx="282" cy="34" r="2.8" fill="#6a8a4e" opacity="0.75"/><circle cx="138" cy="5" r="4.5" fill="#33502c" opacity="0.75"/><circle cx="443" cy="44" r="5.4" fill="#3f5c32" opacity="0.75"/><circle cx="137" cy="19" r="4.8" fill="#3f5c32" opacity="0.75"/><circle cx="393" cy="47" r="5.2" fill="#6a8a4e" opacity="0.75"/><circle cx="222" cy="11" r="3.8" fill="#8ba563" opacity="0.75"/><circle cx="241" cy="89" r="3.6" fill="#33502c" opacity="0.75"/><circle cx="341" cy="90" r="5.8" fill="#6a8a4e" opacity="0.75"/><circle cx="287" cy="78" r="3.6" fill="#6a8a4e" opacity="0.75"/><circle cx="197" cy="95" r="5.1" fill="#7b9858" opacity="0.75"/><circle cx="208" cy="34" r="3.8" fill="#6a8a4e" opacity="0.75"/><circle cx="386" cy="56" r="5.3" fill="#8ba563" opacity="0.75"/><circle cx="339" cy="78" r="4.4" fill="#4c6a3a" opacity="0.75"/><circle cx="350" cy="15" r="2.8" fill="#33502c" opacity="0.75"/><circle cx="471" cy="25" r="2.6" fill="#7b9858" opacity="0.75"/><circle cx="129" cy="13" r="3.5" fill="#3f5c32" opacity="0.75"/><circle cx="375" cy="78" r="2.7" fill="#7b9858" opacity="0.75"/><circle cx="232" cy="52" r="3.7" fill="#6a8a4e" opacity="0.75"/><circle cx="411" cy="88" r="2.8" fill="#8ba563" opacity="0.75"/><circle cx="376" cy="7" r="5.4" fill="#33502c" opacity="0.75"/><circle cx="207" cy="19" r="5.2" fill="#7b9858" opacity="0.75"/><circle cx="245" cy="43" r="3.7" fill="#4c6a3a" opacity="0.75"/><circle cx="507" cy="65" r="4.2" fill="#7b9858" opacity="0.75"/><circle cx="439" cy="4" r="4.7" fill="#3f5c32" opacity="0.75"/><circle cx="275" cy="80" r="4.8" fill="#4c6a3a" opacity="0.75"/><circle cx="107" cy="35" r="2.8" fill="#33502c" opacity="0.75"/><circle cx="502" cy="62" r="4.3" fill="#8ba563" opacity="0.75"/><circle cx="109" cy="8" r="5.7" fill="#557440" opacity="0.75"/><circle cx="207" cy="13" r="4.7" fill="#8ba563" opacity="0.75"/><circle cx="175" cy="18" r="4.0" fill="#6a8a4e" opacity="0.75"/><circle cx="219" cy="86" r="4.2" fill="#8ba563" opacity="0.75"/><circle cx="153" cy="62" r="5.2" fill="#557440" opacity="0.75"/><circle cx="484" cy="73" r="2.6" fill="#33502c" opacity="0.75"/><circle cx="482" cy="1" r="2.9" fill="#557440" opacity="0.75"/><circle cx="254" cy="56" r="4.6" fill="#33502c" opacity="0.75"/><circle cx="352" cy="20" r="3.1" fill="#6a8a4e" opacity="0.75"/><circle cx="272" cy="89" r="5.8" fill="#8ba563" opacity="0.75"/><circle cx="333" cy="80" r="4.2" fill="#6a8a4e" opacity="0.75"/><circle cx="306" cy="38" r="5.8" fill="#8ba563" opacity="0.75"/><circle cx="332" cy="94" r="4.2" fill="#557440" opacity="0.75"/><circle cx="271" cy="19" r="3.0" fill="#4c6a3a" opacity="0.75"/><circle cx="265" cy="50" r="4.3" fill="#6a8a4e" opacity="0.75"/><circle cx="432" cy="3" r="5.7" fill="#3f5c32" opacity="0.75"/><circle cx="468" cy="88" r="4.1" fill="#557440" opacity="0.75"/><circle cx="401" cy="58" r="3.1" fill="#557440" opacity="0.75"/><circle cx="425" cy="12" r="5.7" fill="#4c6a3a" opacity="0.75"/><circle cx="319" cy="61" r="6.0" fill="#6a8a4e" opacity="0.75"/><circle cx="319" cy="2" r="4.5" fill="#557440" opacity="0.75"/><circle cx="106" cy="80" r="5.5" fill="#4c6a3a" opacity="0.75"/><circle cx="158" cy="33" r="4.7" fill="#7b9858" opacity="0.75"/><circle cx="145" cy="45" r="4.1" fill="#8ba563" opacity="0.75"/><circle cx="348" cy="84" r="3.6" fill="#4c6a3a" opacity="0.75"/><circle cx="183" cy="17" r="4.9" fill="#4c6a3a" opacity="0.75"/><circle cx="448" cy="18" r="4.4" fill="#7b9858" opacity="0.75"/><circle cx="310" cy="93" r="5.9" fill="#6a8a4e" opacity="0.75"/><circle cx="234" cy="5" r="3.6" fill="#33502c" opacity="0.75"/><circle cx="382" cy="4" r="2.8" fill="#557440" opacity="0.75"/><circle cx="149" cy="37" r="4.1" fill="#4c6a3a" opacity="0.75"/><circle cx="449" cy="63" r="2.5" fill="#33502c" opacity="0.75"/><circle cx="400" cy="45" r="3.5" fill="#3f5c32" opacity="0.75"/><circle cx="295" cy="-2" r="6.0" fill="#4c6a3a" opacity="0.75"/><circle cx="403" cy="88" r="3.0" fill="#8ba563" opacity="0.75"/><circle cx="261" cy="52" r="3.5" fill="#6a8a4e" opacity="0.75"/><circle cx="418" cy="53" r="2.8" fill="#557440" opacity="0.75"/><circle cx="188" cy="71" r="3.7" fill="#6a8a4e" opacity="0.75"/><circle cx="339" cy="70" r="3.7" fill="#4c6a3a" opacity="0.75"/><circle cx="264" cy="7" r="4.7" fill="#557440" opacity="0.75"/><circle cx="386" cy="69" r="3.1" fill="#33502c" opacity="0.75"/><circle cx="120" cy="44" r="5.0" fill="#3f5c32" opacity="0.75"/><circle cx="199" cy="13" r="2.9" fill="#33502c" opacity="0.75"/><circle cx="425" cy="32" r="5.4" fill="#7b9858" opacity="0.75"/><circle cx="163" cy="18" r="3.0" fill="#8ba563" opacity="0.75"/><circle cx="265" cy="30" r="3.9" fill="#3f5c32" opacity="0.75"/><circle cx="407" cy="59" r="3.6" fill="#4c6a3a" opacity="0.75"/><circle cx="433" cy="64" r="4.6" fill="#3f5c32" opacity="0.75"/><circle cx="213" cy="16" r="3.6" fill="#33502c" opacity="0.75"/><circle cx="149" cy="35" r="4.3" fill="#4c6a3a" opacity="0.75"/><circle cx="227" cy="7" r="5.0" fill="#6a8a4e" opacity="0.75"/><circle cx="423" cy="88" r="4.4" fill="#6a8a4e" opacity="0.75"/><circle cx="359" cy="49" r="4.5" fill="#557440" opacity="0.75"/><circle cx="515" cy="49" r="5.0" fill="#4c6a3a" opacity="0.75"/><circle cx="493" cy="54" r="2.6" fill="#8ba563" opacity="0.75"/><circle cx="187" cy="5" r="3.4" fill="#7b9858" opacity="0.75"/><circle cx="278" cy="31" r="2.8" fill="#4c6a3a" opacity="0.75"/><circle cx="255" cy="44" r="2.9" fill="#8ba563" opacity="0.75"/><circle cx="161" cy="88" r="4.4" fill="#7b9858" opacity="0.75"/><circle cx="131" cy="89" r="3.1" fill="#8ba563" opacity="0.75"/><circle cx="517" cy="80" r="4.6" fill="#3f5c32" opacity="0.75"/><circle cx="493" cy="-3" r="4.9" fill="#6a8a4e" opacity="0.75"/><circle cx="205" cy="55" r="5.4" fill="#557440" opacity="0.75"/><circle cx="353" cy="79" r="4.1" fill="#33502c" opacity="0.75"/><circle cx="180" cy="97" r="5.8" fill="#8ba563" opacity="0.75"/><circle cx="162" cy="73" r="5.5" fill="#33502c" opacity="0.75"/><circle cx="360" cy="62" r="5.2" fill="#557440" opacity="0.75"/><circle cx="188" cy="44" r="3.0" fill="#33502c" opacity="0.75"/><circle cx="154" cy="38" r="3.7" fill="#557440" opacity="0.75"/><circle cx="214" cy="54" r="3.7" fill="#8ba563" opacity="0.75"/><circle cx="430" cy="70" r="5.3" fill="#33502c" opacity="0.75"/><circle cx="503" cy="58" r="4.1" fill="#33502c" opacity="0.75"/><circle cx="477" cy="89" r="4.5" fill="#33502c" opacity="0.75"/><circle cx="417" cy="46" r="6.0" fill="#4c6a3a" opacity="0.75"/><circle cx="481" cy="67" r="5.4" fill="#3f5c32" opacity="0.75"/><circle cx="340" cy="88" r="4.3" fill="#7b9858" opacity="0.75"/><circle cx="321" cy="39" r="2.6" fill="#3f5c32" opacity="0.75"/><circle cx="228" cy="59" r="4.0" fill="#33502c" opacity="0.75"/><circle cx="353" cy="73" r="3.6" fill="#7b9858" opacity="0.75"/><circle cx="469" cy="22" r="5.5" fill="#557440" opacity="0.75"/><circle cx="314" cy="37" r="2.7" fill="#8ba563" opacity="0.75"/><circle cx="149" cy="89" r="4.4" fill="#8ba563" opacity="0.75"/><circle cx="269" cy="21" r="2.7" fill="#8ba563" opacity="0.75"/><circle cx="506" cy="64" r="5.5" fill="#33502c" opacity="0.75"/><circle cx="339" cy="14" r="4.8" fill="#33502c" opacity="0.75"/><circle cx="340" cy="88" r="2.8" fill="#4c6a3a" opacity="0.75"/><circle cx="159" cy="86" r="4.5" fill="#33502c" opacity="0.75"/><circle cx="105" cy="22" r="3.5" fill="#6a8a4e" opacity="0.75"/><circle cx="176" cy="42" r="4.1" fill="#7b9858" opacity="0.75"/><circle cx="270" cy="33" r="4.5" fill="#3f5c32" opacity="0.75"/><circle cx="232" cy="43" r="3.6" fill="#6a8a4e" opacity="0.75"/><circle cx="312" cy="91" r="5.9" fill="#33502c" opacity="0.75"/><circle cx="470" cy="17" r="5.5" fill="#8ba563" opacity="0.75"/><circle cx="477" cy="17" r="5.4" fill="#6a8a4e" opacity="0.75"/><circle cx="478" cy="-1" r="4.7" fill="#8ba563" opacity="0.75"/><circle cx="518" cy="17" r="4.7" fill="#557440" opacity="0.75"/><circle cx="499" cy="96" r="4.8" fill="#6a8a4e" opacity="0.75"/><circle cx="406" cy="29" r="5.7" fill="#4c6a3a" opacity="0.75"/><circle cx="279" cy="86" r="3.7" fill="#4c6a3a" opacity="0.75"/><circle cx="290" cy="5" r="3.3" fill="#6a8a4e" opacity="0.75"/><circle cx="155" cy="67" r="3.4" fill="#8ba563" opacity="0.75"/><circle cx="203" cy="64" r="5.3" fill="#6a8a4e" opacity="0.75"/><circle cx="439" cy="50" r="2.9" fill="#7b9858" opacity="0.75"/><circle cx="200" cy="27" r="5.7" fill="#8ba563" opacity="0.75"/><circle cx="199" cy="10" r="4.8" fill="#33502c" opacity="0.75"/><circle cx="513" cy="41" r="4.3" fill="#7b9858" opacity="0.75"/><circle cx="482" cy="-2" r="4.6" fill="#7b9858" opacity="0.75"/><circle cx="209" cy="78" r="2.8" fill="#6a8a4e" opacity="0.75"/><circle cx="515" cy="16" r="3.1" fill="#8ba563" opacity="0.75"/><circle cx="332" cy="16" r="5.6" fill="#3f5c32" opacity="0.75"/><circle cx="363" cy="90" r="4.5" fill="#3f5c32" opacity="0.75"/><circle cx="491" cy="47" r="3.1" fill="#7b9858" opacity="0.75"/><circle cx="427" cy="89" r="3.6" fill="#33502c" opacity="0.75"/><circle cx="430" cy="49" r="4.3" fill="#4c6a3a" opacity="0.75"/><circle cx="368" cy="96" r="5.1" fill="#7b9858" opacity="0.75"/><circle cx="177" cy="76" r="3.1" fill="#7b9858" opacity="0.75"/><circle cx="286" cy="65" r="4.4" fill="#6a8a4e" opacity="0.75"/><circle cx="431" cy="77" r="3.3" fill="#33502c" opacity="0.75"/><circle cx="331" cy="83" r="4.6" fill="#6a8a4e" opacity="0.75"/><circle cx="120" cy="57" r="5.0" fill="#7b9858" opacity="0.75"/><circle cx="291" cy="86" r="3.6" fill="#7b9858" opacity="0.75"/><circle cx="112" cy="47" r="4.0" fill="#33502c" opacity="0.75"/><circle cx="405" cy="84" r="2.6" fill="#3f5c32" opacity="0.75"/><circle cx="482" cy="54" r="4.4" fill="#4c6a3a" opacity="0.75"/><circle cx="405" cy="60" r="2.7" fill="#33502c" opacity="0.75"/><circle cx="123" cy="29" r="4.7" fill="#7b9858" opacity="0.75"/><circle cx="429" cy="74" r="4.2" fill="#8ba563" opacity="0.75"/><circle cx="446" cy="14" r="3.4" fill="#557440" opacity="0.75"/><circle cx="311" cy="64" r="4.6" fill="#33502c" opacity="0.75"/><circle cx="130" cy="38" r="3.8" fill="#557440" opacity="0.75"/><circle cx="397" cy="94" r="2.9" fill="#4c6a3a" opacity="0.75"/><circle cx="421" cy="97" r="3.0" fill="#33502c" opacity="0.75"/><circle cx="321" cy="97" r="2.5" fill="#33502c" opacity="0.75"/><circle cx="474" cy="11" r="3.9" fill="#6a8a4e" opacity="0.75"/><circle cx="301" cy="91" r="5.9" fill="#8ba563" opacity="0.75"/><circle cx="518" cy="74" r="5.1" fill="#557440" opacity="0.75"/><circle cx="228" cy="9" r="5.5" fill="#33502c" opacity="0.75"/><circle cx="297" cy="91" r="3.8" fill="#6a8a4e" opacity="0.75"/><circle cx="498" cy="90" r="3.3" fill="#557440" opacity="0.75"/><circle cx="272" cy="63" r="2.7" fill="#6a8a4e" opacity="0.75"/><circle cx="340" cy="89" r="5.6" fill="#557440" opacity="0.75"/><circle cx="297" cy="37" r="5.5" fill="#33502c" opacity="0.75"/><circle cx="262" cy="2" r="4.0" fill="#557440" opacity="0.75"/><circle cx="181" cy="53" r="3.1" fill="#557440" opacity="0.75"/><circle cx="271" cy="57" r="5.2" fill="#33502c" opacity="0.75"/><circle cx="291" cy="97" r="4.9" fill="#4c6a3a" opacity="0.75"/><circle cx="307" cy="52" r="4.0" fill="#3f5c32" opacity="0.75"/><circle cx="392" cy="34" r="3.5" fill="#3f5c32" opacity="0.75"/><circle cx="320" cy="72" r="4.3" fill="#7b9858" opacity="0.75"/><circle cx="488" cy="69" r="3.4" fill="#6a8a4e" opacity="0.75"/><circle cx="129" cy="71" r="5.2" fill="#557440" opacity="0.75"/><circle cx="423" cy="70" r="5.7" fill="#3f5c32" opacity="0.75"/><circle cx="519" cy="82" r="4.1" fill="#4c6a3a" opacity="0.75"/><circle cx="471" cy="30" r="5.2" fill="#7b9858" opacity="0.75"/><circle cx="383" cy="28" r="4.6" fill="#33502c" opacity="0.75"/><circle cx="122" cy="12" r="4.6" fill="#3f5c32" opacity="0.75"/><circle cx="192" cy="38" r="4.2" fill="#8ba563" opacity="0.75"/><circle cx="161" cy="68" r="3.4" fill="#8ba563" opacity="0.75"/><circle cx="292" cy="35" r="5.6" fill="#4c6a3a" opacity="0.75"/><circle cx="221" cy="69" r="3.9" fill="#33502c" opacity="0.75"/><circle cx="319" cy="33" r="2.9" fill="#6a8a4e" opacity="0.75"/><circle cx="248" cy="19" r="2.6" fill="#3f5c32" opacity="0.75"/><circle cx="415" cy="46" r="2.5" fill="#4c6a3a" opacity="0.75"/><circle cx="510" cy="27" r="4.8" fill="#4c6a3a" opacity="0.75"/><circle cx="195" cy="67" r="4.8" fill="#4c6a3a" opacity="0.75"/><circle cx="465" cy="21" r="4.7" fill="#3f5c32" opacity="0.75"/><circle cx="437" cy="9" r="4.2" fill="#33502c" opacity="0.75"/><circle cx="264" cy="30" r="4.2" fill="#6a8a4e" opacity="0.75"/><circle cx="197" cy="90" r="3.2" fill="#4c6a3a" opacity="0.75"/><circle cx="174" cy="64" r="3.3" fill="#3f5c32" opacity="0.75"/><circle cx="413" cy="89" r="5.3" fill="#33502c" opacity="0.75"/><circle cx="347" cy="68" r="4.4" fill="#8ba563" opacity="0.75"/><circle cx="485" cy="88" r="2.9" fill="#3f5c32" opacity="0.75"/><circle cx="484" cy="24" r="3.8" fill="#4c6a3a" opacity="0.75"/><circle cx="348" cy="44" r="3.6" fill="#6a8a4e" opacity="0.75"/><circle cx="135" cy="1" r="3.6" fill="#6a8a4e" opacity="0.75"/><circle cx="340" cy="23" r="4.8" fill="#557440" opacity="0.75"/><circle cx="372" cy="36" r="3.7" fill="#6a8a4e" opacity="0.75"/><circle cx="118" cy="68" r="3.3" fill="#3f5c32" opacity="0.75"/><circle cx="365" cy="60" r="3.9" fill="#33502c" opacity="0.75"/><circle cx="131" cy="4" r="4.1" fill="#33502c" opacity="0.75"/><circle cx="263" cy="89" r="2.6" fill="#557440" opacity="0.75"/><circle cx="389" cy="25" r="4.2" fill="#33502c" opacity="0.75"/><circle cx="510" cy="12" r="3.2" fill="#557440" opacity="0.75"/><circle cx="212" cy="19" r="4.3" fill="#7b9858" opacity="0.75"/><circle cx="512" cy="-3" r="4.4" fill="#4c6a3a" opacity="0.75"/><circle cx="375" cy="52" r="4.7" fill="#7b9858" opacity="0.75"/><circle cx="472" cy="67" r="5.3" fill="#6a8a4e" opacity="0.75"/><circle cx="249" cy="87" r="3.6" fill="#8ba563" opacity="0.75"/><circle cx="191" cy="37" r="3.0" fill="#557440" opacity="0.75"/><circle cx="447" cy="13" r="4.7" fill="#33502c" opacity="0.75"/><circle cx="439" cy="27" r="4.0" fill="#6a8a4e" opacity="0.75"/><circle cx="416" cy="51" r="3.3" fill="#557440" opacity="0.75"/><circle cx="255" cy="68" r="5.7" fill="#8ba563" opacity="0.75"/><circle cx="157" cy="3" r="2.7" fill="#3f5c32" opacity="0.75"/><circle cx="473" cy="28" r="5.5" fill="#7b9858" opacity="0.75"/><circle cx="425" cy="46" r="3.1" fill="#4c6a3a" opacity="0.75"/><circle cx="276" cy="46" r="3.7" fill="#33502c" opacity="0.75"/><circle cx="316" cy="77" r="3.9" fill="#8ba563" opacity="0.75"/><circle cx="368" cy="34" r="4.9" fill="#557440" opacity="0.75"/><circle cx="244" cy="74" r="5.4" fill="#4c6a3a" opacity="0.75"/><circle cx="159" cy="96" r="4.7" fill="#557440" opacity="0.75"/><circle cx="364" cy="81" r="5.3" fill="#557440" opacity="0.75"/><circle cx="188" cy="60" r="3.5" fill="#8ba563" opacity="0.75"/><circle cx="182" cy="-2" r="4.5" fill="#4c6a3a" opacity="0.75"/><circle cx="508" cy="11" r="4.9" fill="#33502c" opacity="0.75"/><circle cx="210" cy="64" r="3.9" fill="#8ba563" opacity="0.75"/><circle cx="515" cy="2" r="5.0" fill="#3f5c32" opacity="0.75"/><circle cx="466" cy="17" r="3.7" fill="#7b9858" opacity="0.75"/><circle cx="517" cy="9" r="3.7" fill="#3f5c32" opacity="0.75"/><circle cx="451" cy="83" r="3.1" fill="#3f5c32" opacity="0.75"/><circle cx="233" cy="78" r="5.4" fill="#6a8a4e" opacity="0.75"/></g><path d="M0 110 L612 100 L612 222 L0 222 Z" fill="#8aa05a"/><rect x="200" y="92" width="200" height="20" fill="#9aae66"/><path d="M0 0 L124 8 L124 110 L0 106 Z" fill="url(#winL)"/><path d="M0 24 L124 28 M0 61 L124 52 M0 99 L124 84" stroke="#aebfd8" stroke-width="5"/><path d="M0 0 L124 8" stroke="#8ea5c6" stroke-width="2"/><path d="M0 110 L50 106 L40 160 L0 175 Z" fill="#3a4a3a"/><rect x="240" y="0" width="130" height="62" fill="url(#perf)"/><rect x="210" y="62" width="160" height="30" fill="url(#perf)"/><rect x="240" y="0" width="6" height="62" fill="#d9dce2"/><rect x="358" y="0" width="12" height="92" fill="#d4d8de"/><rect x="270" y="26" width="95" height="4" fill="#2f4c78"/><rect x="250" y="58" width="100" height="5" fill="#2f4c78"/><rect x="292" y="32" width="25" height="22" fill="#a0603e"/><rect x="288" y="79" width="72" height="13" fill="#324f63"/><rect x="210" y="85" width="20" height="7" fill="#3a4c55"/><path d="M482 20 L611 0 L611 118 L482 105 Z" fill="url(#winR)"/><path d="M482 20 L611 1" stroke="#f4f5f8" stroke-width="4"/><path d="M482 54 L611 44 M482 86 L611 80" stroke="#f0f2f6" stroke-width="4"/><rect x="596" y="0" width="15" height="62" fill="#b36b4e"/><path d="M430 108 L611 178 L611 196 L560 172 L430 116 Z" fill="#c7cac8"/><g filter="url(#soft)"><ellipse cx="64" cy="108" rx="7" ry="25" fill="#a7bf64" opacity="0.7"/><ellipse cx="101" cy="109" rx="11" ry="27" fill="#8cab4a" opacity="0.7"/><ellipse cx="112" cy="117" rx="11" ry="27" fill="#79983f" opacity="0.7"/><ellipse cx="110" cy="82" rx="8" ry="33" fill="#a7bf64" opacity="0.7"/><ellipse cx="47" cy="100" rx="7" ry="22" fill="#79983f" opacity="0.7"/><ellipse cx="59" cy="100" rx="7" ry="27" fill="#9fbb5c" opacity="0.7"/><ellipse cx="211" cy="77" rx="7" ry="19" fill="#79983f" opacity="0.7"/><ellipse cx="46" cy="122" rx="8" ry="35" fill="#9fbb5c" opacity="0.7"/><ellipse cx="106" cy="113" rx="6" ry="24" fill="#a7bf64" opacity="0.7"/><ellipse cx="151" cy="112" rx="7" ry="22" fill="#b2c76e" opacity="0.7"/><ellipse cx="205" cy="125" rx="11" ry="25" fill="#c1d07e" opacity="0.7"/><ellipse cx="25" cy="125" rx="9" ry="34" fill="#c1d07e" opacity="0.7"/><ellipse cx="31" cy="92" rx="8" ry="31" fill="#a7bf64" opacity="0.7"/><ellipse cx="117" cy="112" rx="8" ry="19" fill="#a7bf64" opacity="0.7"/><ellipse cx="73" cy="88" rx="9" ry="34" fill="#b2c76e" opacity="0.7"/><ellipse cx="192" cy="121" rx="12" ry="31" fill="#9fbb5c" opacity="0.7"/><ellipse cx="221" cy="101" rx="8" ry="32" fill="#a7bf64" opacity="0.7"/><ellipse cx="20" cy="96" rx="8" ry="21" fill="#b2c76e" opacity="0.7"/><ellipse cx="126" cy="91" rx="10" ry="35" fill="#79983f" opacity="0.7"/><ellipse cx="93" cy="90" rx="8" ry="33" fill="#9fbb5c" opacity="0.7"/><ellipse cx="73" cy="73" rx="6" ry="21" fill="#8cab4a" opacity="0.7"/><ellipse cx="135" cy="101" rx="7" ry="21" fill="#8cab4a" opacity="0.7"/><ellipse cx="97" cy="69" rx="8" ry="18" fill="#9fbb5c" opacity="0.7"/><ellipse cx="104" cy="86" rx="12" ry="27" fill="#8cab4a" opacity="0.7"/><ellipse cx="20" cy="69" rx="10" ry="19" fill="#a7bf64" opacity="0.7"/><ellipse cx="232" cy="100" rx="7" ry="34" fill="#79983f" opacity="0.7"/><ellipse cx="187" cy="125" rx="6" ry="32" fill="#79983f" opacity="0.7"/><ellipse cx="223" cy="80" rx="8" ry="21" fill="#9fbb5c" opacity="0.7"/><ellipse cx="48" cy="102" rx="10" ry="24" fill="#8cab4a" opacity="0.7"/><ellipse cx="151" cy="86" rx="10" ry="25" fill="#79983f" opacity="0.7"/><ellipse cx="126" cy="94" rx="11" ry="19" fill="#c1d07e" opacity="0.7"/><ellipse cx="179" cy="92" rx="11" ry="26" fill="#a7bf64" opacity="0.7"/><ellipse cx="66" cy="104" rx="9" ry="28" fill="#9fbb5c" opacity="0.7"/><ellipse cx="131" cy="90" rx="6" ry="22" fill="#9fbb5c" opacity="0.7"/><ellipse cx="220" cy="75" rx="12" ry="26" fill="#c1d07e" opacity="0.7"/><ellipse cx="152" cy="77" rx="9" ry="26" fill="#9fbb5c" opacity="0.7"/><ellipse cx="206" cy="82" rx="9" ry="35" fill="#8cab4a" opacity="0.7"/><ellipse cx="56" cy="127" rx="7" ry="31" fill="#9fbb5c" opacity="0.7"/><ellipse cx="190" cy="106" rx="6" ry="35" fill="#9fbb5c" opacity="0.7"/><ellipse cx="172" cy="87" rx="9" ry="32" fill="#a7bf64" opacity="0.7"/><ellipse cx="18" cy="92" rx="12" ry="26" fill="#8cab4a" opacity="0.7"/><ellipse cx="31" cy="105" rx="9" ry="31" fill="#8cab4a" opacity="0.7"/><ellipse cx="31" cy="88" rx="11" ry="18" fill="#9fbb5c" opacity="0.7"/><ellipse cx="190" cy="73" rx="7" ry="24" fill="#9fbb5c" opacity="0.7"/><ellipse cx="219" cy="119" rx="8" ry="21" fill="#79983f" opacity="0.7"/><ellipse cx="55" cy="96" rx="10" ry="32" fill="#79983f" opacity="0.7"/><ellipse cx="31" cy="120" rx="10" ry="21" fill="#c1d07e" opacity="0.7"/><ellipse cx="228" cy="108" rx="8" ry="35" fill="#b2c76e" opacity="0.7"/><ellipse cx="169" cy="125" rx="10" ry="34" fill="#8cab4a" opacity="0.7"/><ellipse cx="168" cy="71" rx="10" ry="20" fill="#79983f" opacity="0.7"/><ellipse cx="24" cy="79" rx="8" ry="22" fill="#a7bf64" opacity="0.7"/><ellipse cx="94" cy="87" rx="10" ry="35" fill="#c1d07e" opacity="0.7"/><ellipse cx="173" cy="123" rx="7" ry="31" fill="#9fbb5c" opacity="0.7"/><ellipse cx="154" cy="97" rx="8" ry="32" fill="#79983f" opacity="0.7"/><ellipse cx="44" cy="67" rx="9" ry="19" fill="#79983f" opacity="0.7"/><ellipse cx="67" cy="97" rx="11" ry="22" fill="#b2c76e" opacity="0.7"/><ellipse cx="224" cy="74" rx="7" ry="29" fill="#79983f" opacity="0.7"/><ellipse cx="100" cy="113" rx="9" ry="28" fill="#9fbb5c" opacity="0.7"/><ellipse cx="96" cy="88" rx="10" ry="28" fill="#b2c76e" opacity="0.7"/><ellipse cx="79" cy="111" rx="7" ry="29" fill="#79983f" opacity="0.7"/><ellipse cx="461" cy="118" rx="8" ry="33" fill="#b2c76e" opacity="0.7"/><ellipse cx="454" cy="132" rx="10" ry="32" fill="#a7bf64" opacity="0.7"/><ellipse cx="526" cy="98" rx="11" ry="21" fill="#9fbb5c" opacity="0.7"/><ellipse cx="461" cy="123" rx="8" ry="29" fill="#9fbb5c" opacity="0.7"/><ellipse cx="529" cy="78" rx="7" ry="19" fill="#a7bf64" opacity="0.7"/><ellipse cx="448" cy="118" rx="12" ry="28" fill="#9fbb5c" opacity="0.7"/><ellipse cx="603" cy="106" rx="10" ry="32" fill="#c1d07e" opacity="0.7"/><ellipse cx="400" cy="88" rx="10" ry="35" fill="#c1d07e" opacity="0.7"/><ellipse cx="589" cy="109" rx="9" ry="28" fill="#8cab4a" opacity="0.7"/><ellipse cx="494" cy="87" rx="6" ry="31" fill="#c1d07e" opacity="0.7"/><ellipse cx="535" cy="131" rx="10" ry="33" fill="#c1d07e" opacity="0.7"/><ellipse cx="484" cy="128" rx="7" ry="25" fill="#b2c76e" opacity="0.7"/><ellipse cx="573" cy="140" rx="6" ry="33" fill="#b2c76e" opacity="0.7"/><ellipse cx="470" cy="118" rx="11" ry="35" fill="#9fbb5c" opacity="0.7"/><ellipse cx="444" cy="100" rx="9" ry="20" fill="#8cab4a" opacity="0.7"/><ellipse cx="527" cy="103" rx="8" ry="23" fill="#8cab4a" opacity="0.7"/><ellipse cx="432" cy="93" rx="7" ry="18" fill="#79983f" opacity="0.7"/><ellipse cx="414" cy="76" rx="11" ry="20" fill="#a7bf64" opacity="0.7"/><ellipse cx="411" cy="135" rx="8" ry="27" fill="#a7bf64" opacity="0.7"/><ellipse cx="597" cy="112" rx="11" ry="20" fill="#8cab4a" opacity="0.7"/><ellipse cx="410" cy="129" rx="10" ry="30" fill="#8cab4a" opacity="0.7"/><ellipse cx="443" cy="112" rx="9" ry="25" fill="#a7bf64" opacity="0.7"/><ellipse cx="523" cy="119" rx="8" ry="18" fill="#9fbb5c" opacity="0.7"/><ellipse cx="424" cy="111" rx="9" ry="29" fill="#79983f" opacity="0.7"/><ellipse cx="422" cy="137" rx="7" ry="27" fill="#a7bf64" opacity="0.7"/><ellipse cx="588" cy="84" rx="8" ry="28" fill="#a7bf64" opacity="0.7"/><ellipse cx="434" cy="97" rx="9" ry="25" fill="#b2c76e" opacity="0.7"/><ellipse cx="524" cy="90" rx="8" ry="20" fill="#a7bf64" opacity="0.7"/><ellipse cx="389" cy="109" rx="8" ry="27" fill="#8cab4a" opacity="0.7"/><ellipse cx="530" cy="111" rx="8" ry="18" fill="#8cab4a" opacity="0.7"/><ellipse cx="495" cy="112" rx="8" ry="30" fill="#a7bf64" opacity="0.7"/><ellipse cx="597" cy="78" rx="12" ry="28" fill="#b2c76e" opacity="0.7"/><ellipse cx="597" cy="124" rx="7" ry="32" fill="#a7bf64" opacity="0.7"/><ellipse cx="388" cy="81" rx="11" ry="20" fill="#b2c76e" opacity="0.7"/><ellipse cx="387" cy="77" rx="8" ry="22" fill="#79983f" opacity="0.7"/><ellipse cx="524" cy="91" rx="9" ry="19" fill="#9fbb5c" opacity="0.7"/><ellipse cx="395" cy="141" rx="8" ry="32" fill="#b2c76e" opacity="0.7"/><ellipse cx="409" cy="82" rx="8" ry="22" fill="#79983f" opacity="0.7"/><ellipse cx="386" cy="115" rx="12" ry="27" fill="#c1d07e" opacity="0.7"/><ellipse cx="540" cy="116" rx="7" ry="29" fill="#a7bf64" opacity="0.7"/><ellipse cx="376" cy="119" rx="10" ry="25" fill="#9fbb5c" opacity="0.7"/><ellipse cx="415" cy="85" rx="7" ry="29" fill="#79983f" opacity="0.7"/><ellipse cx="531" cy="123" rx="11" ry="25" fill="#c1d07e" opacity="0.7"/><ellipse cx="391" cy="89" rx="10" ry="32" fill="#a7bf64" opacity="0.7"/><ellipse cx="539" cy="117" rx="10" ry="24" fill="#c1d07e" opacity="0.7"/><ellipse cx="504" cy="127" rx="8" ry="21" fill="#a7bf64" opacity="0.7"/><ellipse cx="407" cy="127" rx="8" ry="20" fill="#79983f" opacity="0.7"/><ellipse cx="382" cy="100" rx="10" ry="24" fill="#79983f" opacity="0.7"/><ellipse cx="489" cy="116" rx="11" ry="24" fill="#9fbb5c" opacity="0.7"/><ellipse cx="501" cy="132" rx="8" ry="31" fill="#9fbb5c" opacity="0.7"/><ellipse cx="455" cy="83" rx="10" ry="24" fill="#a7bf64" opacity="0.7"/><ellipse cx="532" cy="105" rx="9" ry="28" fill="#a7bf64" opacity="0.7"/><ellipse cx="409" cy="117" rx="7" ry="24" fill="#79983f" opacity="0.7"/><ellipse cx="429" cy="96" rx="9" ry="30" fill="#b2c76e" opacity="0.7"/><ellipse cx="587" cy="120" rx="7" ry="22" fill="#8cab4a" opacity="0.7"/><ellipse cx="475" cy="114" rx="12" ry="27" fill="#a7bf64" opacity="0.7"/><ellipse cx="480" cy="101" rx="11" ry="22" fill="#9fbb5c" opacity="0.7"/><ellipse cx="531" cy="100" rx="12" ry="20" fill="#b2c76e" opacity="0.7"/><ellipse cx="506" cy="106" rx="7" ry="23" fill="#b2c76e" opacity="0.7"/><ellipse cx="560" cy="87" rx="7" ry="31" fill="#8cab4a" opacity="0.7"/><ellipse cx="252" cy="97" rx="5" ry="18" fill="#9fbb5c" opacity="0.7"/><ellipse cx="235" cy="107" rx="7" ry="24" fill="#8cab4a" opacity="0.7"/><ellipse cx="207" cy="103" rx="7" ry="23" fill="#b2c76e" opacity="0.7"/><ellipse cx="259" cy="81" rx="6" ry="19" fill="#8cab4a" opacity="0.7"/><ellipse cx="240" cy="88" rx="6" ry="21" fill="#9fbb5c" opacity="0.7"/><ellipse cx="216" cy="85" rx="7" ry="18" fill="#8cab4a" opacity="0.7"/><ellipse cx="210" cy="105" rx="7" ry="24" fill="#b2c76e" opacity="0.7"/><ellipse cx="248" cy="87" rx="7" ry="23" fill="#b2c76e" opacity="0.7"/><ellipse cx="247" cy="82" rx="8" ry="16" fill="#8cab4a" opacity="0.7"/><ellipse cx="239" cy="93" rx="7" ry="20" fill="#8cab4a" opacity="0.7"/></g><path d="M169 110 L171 185" stroke="#6f6a55" stroke-width="1.5" opacity="0.6"/><path d="M126 110 L126 185" stroke="#6f6a55" stroke-width="1.5" opacity="0.6"/><path d="M96 110 L95 185" stroke="#6f6a55" stroke-width="1.5" opacity="0.6"/><path d="M210 110 L208 185" stroke="#6f6a55" stroke-width="1.5" opacity="0.6"/><path d="M209 110 L210 185" stroke="#6f6a55" stroke-width="1.5" opacity="0.6"/><path d="M44 110 L46 185" stroke="#6f6a55" stroke-width="1.5" opacity="0.6"/><path d="M49 110 L50 185" stroke="#6f6a55" stroke-width="1.5" opacity="0.6"/><path d="M414 110 L417 185" stroke="#6f6a55" stroke-width="1.5" opacity="0.6"/><path d="M452 110 L454 185" stroke="#6f6a55" stroke-width="1.5" opacity="0.6"/><path d="M402 110 L403 185" stroke="#6f6a55" stroke-width="1.5" opacity="0.6"/><path d="M404 110 L401 185" stroke="#6f6a55" stroke-width="1.5" opacity="0.6"/><path d="M504 110 L507 185" stroke="#6f6a55" stroke-width="1.5" opacity="0.6"/><path d="M527 110 L529 185" stroke="#6f6a55" stroke-width="1.5" opacity="0.6"/><path d="M547 110 L547 185" stroke="#6f6a55" stroke-width="1.5" opacity="0.6"/><path d="M0 192 L172 126 L178 132 L0 202 Z" fill="#4a6a96"/><path d="M95 170 L205 120 L280 112 L276 172 L140 190 Z" fill="#d0c23c"/><path d="M340 110 L420 112 L560 175 L611 190 L611 212 L520 210 L345 172 Z" fill="#c9bb3e"/><path d="M0 200 L80 190 L85 212 L0 214 Z" fill="#d2c23a"/><path d="M110 178 Q180 150 270 140 L272 150 Q185 160 122 186 Z" fill="#7f9c4c"/><path d="M345 140 Q430 150 540 190 L530 196 Q430 160 345 150 Z" fill="#7f9c4c"/><path d="M420 125 Q470 140 520 165 L515 170 Q470 148 418 132 Z" fill="#86a055"/><path d="M200 130 L230 128 L215 172 L185 175 Z" fill="#86a055"/><path d="M380 130 L405 130 L420 185 L395 185 Z" fill="#86a055"/><path d="M210 122 Q240 120 270 118 L268 124 Q240 126 214 130 Z" fill="#6d2b40"/><path d="M198 140 Q222 150 225 180 L215 181 Q212 155 192 146 Z" fill="#6d2b40"/><path d="M150 155 L195 150 L192 158 L148 162 Z" fill="#6d2b40"/><path d="M395 142 Q380 160 393 185 L402 184 Q392 162 405 147 Z" fill="#6d2b40"/><path d="M350 118 Q385 116 405 128 L400 133 Q382 124 352 125 Z" fill="#6d2b40"/><path d="M465 140 L505 144 L512 152 L470 150 Z" fill="#6d2b40"/><path d="M505 182 L560 186 L570 198 L515 196 Z" fill="#6d2b40"/><path d="M425 118 L455 120 L460 126 L430 125 Z" fill="#6d2b40"/><path d="M590 160 L611 165 L611 175 L592 170 Z" fill="#6d2b40"/><circle cx="100" cy="160" r="7" fill="#2f5a2c" opacity="0.9"/><circle cx="130" cy="150" r="8" fill="#2f5a2c" opacity="0.9"/><circle cx="440" cy="150" r="7" fill="#2f5a2c" opacity="0.9"/><circle cx="500" cy="160" r="8" fill="#2f5a2c" opacity="0.9"/><circle cx="560" cy="175" r="7" fill="#2f5a2c" opacity="0.9"/><circle cx="262" cy="108" r="6" fill="#2f5a2c" opacity="0.9"/><circle cx="262" cy="125" r="7" fill="#2f5a2c" opacity="0.9"/><circle cx="258" cy="142" r="8" fill="#2f5a2c" opacity="0.9"/><circle cx="255" cy="160" r="8" fill="#2f5a2c" opacity="0.9"/><circle cx="246" cy="175" r="9" fill="#2f5a2c" opacity="0.9"/><circle cx="340" cy="108" r="6" fill="#2f5a2c" opacity="0.9"/><circle cx="345" cy="124" r="7" fill="#2f5a2c" opacity="0.9"/><circle cx="352" cy="140" r="8" fill="#2f5a2c" opacity="0.9"/><circle cx="360" cy="158" r="9" fill="#2f5a2c" opacity="0.9"/><circle cx="365" cy="172" r="8" fill="#2f5a2c" opacity="0.9"/><circle cx="236" cy="110" r="7" fill="#2f5a2c" opacity="0.9"/><circle cx="370" cy="110" r="6" fill="#2f5a2c" opacity="0.9"/><circle cx="150" cy="170" r="9" fill="#2f5a2c" opacity="0.9"/><circle cx="190" cy="160" r="10" fill="#2f5a2c" opacity="0.9"/><circle cx="430" cy="175" r="10" fill="#2f5a2c" opacity="0.9"/><circle cx="460" cy="188" r="9" fill="#2f5a2c" opacity="0.9"/><circle cx="120" cy="180" r="8" fill="#2f5a2c" opacity="0.9"/><path d="M287 110 L325 110 L338 173 L276 173 Z" fill="#d9dadd"/><path d="M285.6 118 L326.7 118" stroke="#aeb0b6" stroke-width="1.5"/><path d="M284.4 125 L328.1 125" stroke="#aeb0b6" stroke-width="1.5"/><path d="M283.2 132 L329.5 132" stroke="#aeb0b6" stroke-width="1.5"/><path d="M281.9 139 L331.0 139" stroke="#aeb0b6" stroke-width="1.5"/><path d="M280.7 146 L332.4 146" stroke="#aeb0b6" stroke-width="1.5"/><path d="M279.5 153 L333.9 153" stroke="#aeb0b6" stroke-width="1.5"/><path d="M278.3 160 L335.3 160" stroke="#aeb0b6" stroke-width="1.5"/><path d="M277.0 167 L336.8 167" stroke="#aeb0b6" stroke-width="1.5"/><path d="M280 160 L334 160 L336 168 L278 168 Z" fill="#b9bbc0"/><path d="M0 206 Q120 196 240 186 L370 186 Q480 196 611 212 L611 222 L0 222 Z" fill="#bdbfc0"/><path d="M180 222 Q250 206 306 205 Q370 206 430 222 Z" fill="#7e9b4a"/><path d="M190 222 Q240 214 270 212 L270 222 Z" fill="#c9bb3e"/><ellipse cx="306" cy="207" rx="58" ry="36" fill="#d4d1cc"/><ellipse cx="306" cy="207" rx="46" ry="28" fill="none" stroke="#9a918c" stroke-width="1.2"/><path d="M272 196 Q306 186 340 196 L320 202 Q306 198 292 202 Z" fill="#7d706c"/><rect x="300" y="196" width="12" height="18" fill="#8a7c78"/><circle cx="562" cy="199" r="3.5" fill="#fff" opacity="0.3"/><circle cx="574" cy="199" r="3.5" fill="#fff" opacity="0.3"/><circle cx="586" cy="199" r="4.5" fill="#fff"/></svg><div class="t" style="left:28px;top:170px;font-size:24px;line-height:34px;font-weight:900;color:#fff;-webkit-text-stroke:1px #fff;letter-spacing:2px;text-shadow:0 0 3px rgba(0,0,0,0.55),0 1px 2px rgba(0,0,0,0.4)">奔赴新校，定个时光...</div></div>
 <!-- announcement -->
 <div class="abs" style="left:1083px;top:171px;width:30px;height:30px;border-radius:7px;background:#fb8b35"></div>
 <svg class="abs" style="left:1083px;top:171px" width="30" height="30" viewBox="0 0 30 30"><path d="M7 12 L11 12 L19 8 L19 22 L11 18 L7 18 Z" fill="#fff"/><path d="M11 18 L12.5 22 L15 22 L14 19" fill="#fff"/><path d="M22 10.5 L24 10.5 M22 15 L24.5 15 M22 19.5 L24 19.5" stroke="#fff" stroke-width="1.6"/></svg>
 <div class="t" style="left:1126px;top:173px;font-size:21px;line-height:30px;font-weight:bold;color:#171a1d">公告</div>
 <svg class="abs" style="left:1178px;top:174px" width="16" height="24" viewBox="0 0 16 24"><path d="M3.5 2.5 L12.5 12 L3.5 21.5" fill="none" stroke="#a5a7ad" stroke-width="2"/></svg>
 <div class="t" style="left:1084px;top:223px;font-size:21px;line-height:30px;color:#34373c">工程技术学院圈子功能上线啦<i style="font-style:normal;margin-left:3px">!</i></div>
 <div class="t" style="left:1084px;top:258px;font-size:21px;line-height:30px;color:#34373c">成都工业学院图书馆电子资源</div>
 <div class="t" style="left:2259px;top:227px;font-size:16px;line-height:20px;color:#a8aab0;letter-spacing:-0.3px">2024-12-25</div>
 <div class="t" style="left:2259px;top:262px;font-size:16px;line-height:20px;color:#a8aab0;letter-spacing:-0.3px">2024-12-11</div>
 <svg class="abs" style="left:2272px;top:175px" width="24" height="24" viewBox="0 0 24 24"><path d="M2 7 L22 7 M2 17 L22 17" stroke="#8e9096" stroke-width="2"/><circle cx="9" cy="7" r="3.6" fill="#fff" stroke="#8e9096" stroke-width="2"/><circle cx="15" cy="17" r="3.6" fill="#fff" stroke="#8e9096" stroke-width="2"/></svg>
 <div class="t" style="left:2298px;top:173px;font-size:20px;line-height:30px;color:#8e9096">管理</div>
 <svg class="abs" style="left:1082px;top:373px" width="24" height="24" viewBox="0 0 24 24"><path d="M12 3 L12 21 M3 12 L21 12" stroke="#6b6e75" stroke-width="2"/></svg>
 <div class="t" style="left:1108px;top:370px;font-size:20px;line-height:30px;color:#858891">发公告</div>

 <!-- my / all card -->
 <div class="card" style="left:423px;top:440px;width:1374px;height:626px"></div>
 <div class="t" style="left:447px;top:469.5px;font-size:21px;line-height:30px;font-weight:bold;color:#171a1d">我的</div>
 <div class="t" style="left:447px;top:782px;font-size:21px;line-height:30px;font-weight:bold;color:#171a1d">全员</div>
  <svg class="abs" style="left:1708px;top:470px" width="24" height="24" viewBox="0 0 24 24"><path d="M2 7 L22 7 M2 17 L22 17" stroke="#8e9096" stroke-width="2"/><circle cx="9" cy="7" r="3.6" fill="#fff" stroke="#8e9096" stroke-width="2"/><circle cx="15" cy="17" r="3.6" fill="#fff" stroke="#8e9096" stroke-width="2"/></svg>
 <div class="t" style="left:1734px;top:468px;font-size:20px;line-height:30px;color:#8e9096">设置</div>
  <svg class="abs" style="left:1708px;top:783px" width="24" height="24" viewBox="0 0 24 24"><path d="M2 7 L22 7 M2 17 L22 17" stroke="#8e9096" stroke-width="2"/><circle cx="9" cy="7" r="3.6" fill="#fff" stroke="#8e9096" stroke-width="2"/><circle cx="15" cy="17" r="3.6" fill="#fff" stroke="#8e9096" stroke-width="2"/></svg>
 <div class="t" style="left:1734px;top:781px;font-size:20px;line-height:30px;color:#8e9096">设置</div>
 <div class="app" style="left:449px;top:522px"><div class="ic" style="background:#1aa6fe"><svg width="66" height="66" viewBox="0 0 66 66"><path d="M33 20.5 L44 27 L44 40 L33 46.5 L22 40 L22 27 Z" fill="none" stroke="#fff" stroke-width="2.6" stroke-linejoin="round"/><path d="M27.5 30 L33 33.5 L38.5 30 M33 33.5 L33 40" fill="none" stroke="#fff" stroke-width="2.6" stroke-linecap="round" stroke-linejoin="round"/></svg></div><div class="lb"><div>物资管理系<br>统</div></div></div>
 <div class="app" style="left:733.5px;top:522px"><div class="ic" style="background:#d3f5c1"><svg width="66" height="66" viewBox="0 0 66 66"><defs><linearGradient id="gg1" x1="0" y1="0" x2="0" y2="1"><stop offset="0" stop-color="#45c53c"/><stop offset="1" stop-color="#10a83b"/></linearGradient></defs><path d="M20.5 21.5 L46.3 27.5 L31 46.5 Z" fill="none" stroke="#5ac94a" stroke-width="3.2"/><circle cx="20.5" cy="21.5" r="8.6" fill="url(#gg1)"/><circle cx="46.3" cy="27.5" r="6.8" fill="url(#gg1)"/><circle cx="31" cy="46.5" r="7" fill="url(#gg1)"/></svg></div><div class="lb"><div>活动创办</div></div></div>
 <div class="app" style="left:1018px;top:522px"><div class="ic" style="background:#d4ebfd"><svg width="66" height="66" viewBox="0 0 66 66"><rect x="12" y="18.5" width="39" height="29" rx="1.5" fill="#1a6ef6"/><rect x="12" y="25.5" width="39" height="3.5" fill="#8fc3fb"/><path d="M16 36.5 L19.5 36.5 M21.5 36.5 L25 36.5 M27 36.5 L30.5 36.5" stroke="#fff" stroke-width="2.2"/><circle cx="45" cy="40" r="10" fill="#d4ebfd"/><circle cx="45" cy="40" r="8" fill="#1a6ef6"/><path d="M42 35.5 L45 38.5 L48 35.5 M41.5 39.5 L48.5 39.5 M41.5 42.5 L48.5 42.5 M45 38.5 L45 45.5" fill="none" stroke="#fff" stroke-width="1.5"/></svg></div><div class="lb"><div>日常报销</div></div></div>
 <div class="app" style="left:1302.5px;top:522px"><div class="ic" style="background:#d3f5c1"><svg width="66" height="66" viewBox="0 0 66 66"><defs><linearGradient id="gg2" x1="0" y1="0" x2="0" y2="1"><stop offset="0" stop-color="#10a83b"/><stop offset="1" stop-color="#3ebd3e"/></linearGradient></defs><path d="M31.5 11 A11 11 0 0 1 37 31.5 Q35.5 33 36 35 Q40 37 40 41 L23 41 Q23 37 27 35 Q27.5 33 26 31.5 A11 11 0 0 1 31.5 11 Z" fill="#10a83b"/><rect x="13.5" y="43" width="37.5" height="7.5" rx="1.5" fill="url(#gg2)"/><rect x="15" y="51.5" width="34" height="3.5" rx="1" fill="#45c23c"/></svg></div><div class="lb"><div>学院印章用<br>印申请</div></div></div>
 <div class="app" style="left:1586.5px;top:522px"><div class="ic" style="background:#d3f5c1"><svg width="66" height="66" viewBox="0 0 66 66"><path d="M20.3 42.5 L20.3 55.5 L32.3 49.5 L44.3 55.5 L44.3 42.5 Z" fill="#4cc13a"/><circle cx="32.3" cy="26.3" r="17.5" fill="#b4f0a6"/><circle cx="32.3" cy="26.3" r="16.2" fill="#12a83b"/><circle cx="32.3" cy="26.3" r="10" fill="none" stroke="#d6fbd0" stroke-width="2.2"/><circle cx="32.3" cy="26.3" r="7.6" fill="#12a83b"/></svg></div><div class="lb"><div>五四评优申<br>报</div></div></div>
 <div class="app" style="left:449px;top:639px"><div class="ic" style="background:#10a9b6"><svg width="66" height="66" viewBox="0 0 66 66"><text x="33" y="28.8" font-family="Liberation Sans" font-weight="bold" font-size="11.5" fill="#fff" text-anchor="middle" letter-spacing="0.2">Beisen</text><text x="33" y="41.5" font-weight="bold" font-size="9" fill="#fff" text-anchor="middle">北森生涯</text></svg></div><div class="lb"><div>成都工业学<br>院北森生<span class="ell">⋯</span></div></div></div>
 <div class="app" style="left:733.5px;top:639px"><div class="ic" style="background:#d4ebfd"><svg width="66" height="66" viewBox="0 0 66 66"><path d="M31.5 55.5 L17 41 Q11 35 13 26 Q16 12 31.5 11 Q47 12 50.5 26 Q52 35 46 41 Z" fill="#1a6ef6"/><path d="M20 33.5 L29 42" stroke="#7ec8fb" stroke-width="4.2" stroke-linecap="square"/><path d="M29 42 L49 22" stroke="#fff" stroke-width="4.2"/></svg></div><div class="lb"><div>考勤打卡</div></div></div>
 <div class="app" style="left:1018px;top:639px"><div class="ic" style="background:#d3f5c1"><svg width="66" height="66" viewBox="0 0 66 66"><circle cx="33" cy="35" r="16.5" fill="none" stroke="#12a83b" stroke-width="4.2"/><circle cx="32.7" cy="18.7" r="6.8" fill="#4cc13a"/><circle cx="17.4" cy="42.6" r="6.8" fill="#4cc13a"/><circle cx="48.6" cy="42.6" r="6.8" fill="#4cc13a"/></svg></div><div class="lb"><div>工程技术学<br>院圈子</div></div></div>
 <div class="app" style="left:1302.5px;top:639px"><div class="ic" style="background:#fde5bf"><svg width="66" height="66" viewBox="0 0 66 66"><defs><linearGradient id="og1" x1="0" y1="0" x2="0" y2="1"><stop offset="0" stop-color="#f37a48"/><stop offset="1" stop-color="#f45420"/></linearGradient></defs><path d="M31.8 11 A10.6 10.6 0 0 1 36.5 31 Q35.5 33.5 36 36 Q39 39 40 42 L23.5 42 Q24.5 39 27.5 36 Q28 33.5 27 31 A10.6 10.6 0 0 1 31.8 11 Z" fill="url(#og1)"/><rect x="12" y="41.5" width="40.4" height="7.5" rx="2" fill="#f5863c"/><rect x="12.5" y="51.5" width="39.5" height="3" rx="1" fill="#f06a30"/></svg></div><div class="lb"><div>OA审批</div></div></div>
 <div class="app" style="left:1586.5px;top:639px"><div class="ic" style="background:#d4ebfd"><svg width="66" height="66" viewBox="0 0 66 66"><defs><clipPath id="cw"><circle cx="32.2" cy="32" r="22"/></clipPath></defs><g clip-path="url(#cw)"><rect x="0" y="0" width="66" height="66" fill="#1f8ef8"/><path d="M19 7 L40.1 28.4 L58 10 L58 0 L19 0 Z" fill="#fdb614"/><path d="M52.2 23.4 L33.7 41.9 L46 56 L66 56 L66 12 Z" fill="#5ec5f6"/><path d="M21 32.6 L44 56 L0 56 L0 42 Z" fill="#0b5cf6"/><path d="M21 32.6 L31 22.5 L40.1 31 L51 20.5 L53.5 23 L33.7 41.9 Z" fill="#d4ebfd"/></g></svg></div><div class="lb"><div>智能财务</div></div></div>
 <div class="app" style="left:449px;top:836px"><div class="ic" style="background:#d4ebfd"><svg width="66" height="66" viewBox="0 0 66 66"><path d="M31.5 55.5 L17 41 Q11 35 13 26 Q16 12 31.5 11 Q47 12 50.5 26 Q52 35 46 41 Z" fill="#1a6ef6"/><path d="M20 33.5 L29 42" stroke="#7ec8fb" stroke-width="4.2" stroke-linecap="square"/><path d="M29 42 L49 22" stroke="#fff" stroke-width="4.2"/></svg></div><div class="lb"><div>考勤打卡</div></div></div>
 <div class="app" style="left:733.5px;top:836px"><div class="ic" style="background:#d4ebfd"><svg width="66" height="66" viewBox="0 0 66 66"><defs><linearGradient id="bg1" gradientUnits="userSpaceOnUse" x1="20" y1="14" x2="45" y2="52"><stop offset="0" stop-color="#4cb2fc"/><stop offset="1" stop-color="#1784f2"/></linearGradient></defs><g fill="url(#bg1)"><circle cx="32" cy="28.5" r="14.8"/><circle cx="19.5" cy="41" r="11.3"/><circle cx="45" cy="41" r="11.3"/><rect x="19.5" y="30" width="25.5" height="22.4"/></g><path d="M23.5 39 Q30 44 37 39" fill="none" stroke="#fff" stroke-width="3.4" stroke-linecap="round"/></svg></div><div class="lb"><div>钉盘</div></div></div>
 <div class="app" style="left:1018px;top:836px"><div class="ic" style="background:#fde5bf"><svg width="66" height="66" viewBox="0 0 66 66"><defs><linearGradient id="og1" x1="0" y1="0" x2="0" y2="1"><stop offset="0" stop-color="#f37a48"/><stop offset="1" stop-color="#f45420"/></linearGradient></defs><path d="M31.8 11 A10.6 10.6 0 0 1 36.5 31 Q35.5 33.5 36 36 Q39 39 40 42 L23.5 42 Q24.5 39 27.5 36 Q28 33.5 27 31 A10.6 10.6 0 0 1 31.8 11 Z" fill="url(#og1)"/><rect x="12" y="41.5" width="40.4" height="7.5" rx="2" fill="#f5863c"/><rect x="12.5" y="51.5" width="39.5" height="3" rx="1" fill="#f06a30"/></svg></div><div class="lb"><div>OA审批</div></div></div>
 <div class="app" style="left:1302.5px;top:836px"><div class="ic" style="background:#efeff2"><svg width="66" height="66" viewBox="0 0 66 66"><rect x="20.3" y="12.8" width="24" height="11" rx="2.5" fill="#4b4d5c"/><rect x="12.7" y="24" width="39" height="20.5" rx="2.5" fill="#4b4d5c"/><circle cx="18" cy="29.5" r="1.5" fill="#fff"/><rect x="18.8" y="35.2" width="27" height="18.8" rx="3" fill="#efeff2"/><rect x="20.3" y="36.7" width="24" height="15.7" rx="2.5" fill="#4b4d5c"/><path d="M24.7 47.2 L40.3 47.2" stroke="#2fcb52" stroke-width="2.3"/></svg></div><div class="lb"><div>智能云打印</div></div></div>
 <div class="app" style="left:1586.5px;top:836px"><div class="ic" style="background:#efeff2"><svg width="66" height="66" viewBox="0 0 66 66"><circle cx="33" cy="32.6" r="19" fill="#4b4d5c"/><path d="M28 26.5 L38 36.5 L33 41 L33 24 L38 28.5 L28 38.5" fill="none" stroke="#2fd159" stroke-width="1.9" stroke-linejoin="round"/></svg></div><div class="lb"><div>智点B1</div></div></div>
 <div class="app" style="left:449px;top:953.5px"><div class="ic" style="background:#fde5bf"><svg width="66" height="66" viewBox="0 0 66 66"><defs><linearGradient id="og2" x1="0" y1="0" x2="0" y2="1"><stop offset="0" stop-color="#fdb414"/><stop offset="1" stop-color="#fb8712"/></linearGradient></defs><path d="M13 16 L45 10 L53.5 50 L21.5 55.5 Z" fill="#f17b3d"/><path d="M17 12.5 L48 12 L49.5 52.5 L19 53.5 Z" fill="url(#og2)"/><path d="M27 33 Q24 30.5 24.5 26 Q25.5 19 33 19 Q40.5 19 41.5 26 Q42 30.5 39 33 L35.5 33 Q38 30 37.8 26.5 Q37 23 33 23 Q29 23 28.5 26.5 Q28 30 30.5 33 Z" fill="#fff"/><path d="M23.5 38.5 L43 38.5 M23.5 44 L37 44" stroke="#fff" stroke-width="2.6"/></svg></div><div class="lb"><div>智能招聘</div></div></div>
 <div class="app" style="left:733.5px;top:953.5px"><div class="ic" style="background:#d4ebfd"><svg width="66" height="66" viewBox="0 0 66 66"><defs><clipPath id="cw"><circle cx="32.2" cy="32" r="22"/></clipPath></defs><g clip-path="url(#cw)"><rect x="0" y="0" width="66" height="66" fill="#1f8ef8"/><path d="M19 7 L40.1 28.4 L58 10 L58 0 L19 0 Z" fill="#fdb614"/><path d="M52.2 23.4 L33.7 41.9 L46 56 L66 56 L66 12 Z" fill="#5ec5f6"/><path d="M21 32.6 L44 56 L0 56 L0 42 Z" fill="#0b5cf6"/><path d="M21 32.6 L31 22.5 L40.1 31 L51 20.5 L53.5 23 L33.7 41.9 Z" fill="#d4ebfd"/></g></svg></div><div class="lb"><div>智能财务</div></div></div>
 <div class="app" style="left:1018px;top:953.5px"><div class="ic" style="background:#d3f5c1"><svg width="66" height="66" viewBox="0 0 66 66"><circle cx="33" cy="35" r="16.5" fill="none" stroke="#12a83b" stroke-width="4.2"/><circle cx="32.7" cy="18.7" r="6.8" fill="#4cc13a"/><circle cx="17.4" cy="42.6" r="6.8" fill="#4cc13a"/><circle cx="48.6" cy="42.6" r="6.8" fill="#4cc13a"/></svg></div><div class="lb"><div>工程技术学<br>院圈子</div></div></div>
 <div class="app" style="left:1302.5px;top:953.5px"><div class="ic" style="background:#efeff2"><svg width="66" height="66" viewBox="0 0 66 66"><path d="M33 21 L33 45 M21 33 L45 33" stroke="#98999e" stroke-width="2.4"/></svg></div><div class="lb"><div>添加</div></div></div>

 <!-- todo card -->
 <div class="card" style="left:1821px;top:440px;width:537px;height:301px"></div>

 <div class="abs" style="left:1845px;top:462px;width:30px;height:30px;border-radius:7px;background:#dcebfd"></div>
 <svg class="abs" style="left:1845px;top:462px" width="30" height="30" viewBox="0 0 30 30"><rect x="6" y="6" width="18.5" height="18.5" rx="3" fill="#1a6ef6"/><path d="M9.5 15 L13.5 19 L21 11" fill="none" stroke="#fff" stroke-width="2.3" stroke-linecap="round" stroke-linejoin="round"/></svg>
 <div class="t" style="left:1888px;top:463px;font-size:21px;line-height:30px;color:#171a1d">待办</div>
 <svg class="abs" style="left:1938px;top:465px" width="16" height="24" viewBox="0 0 16 24"><path d="M4 3 L12 12 L4 21" fill="none" stroke="#a5a7ad" stroke-width="2"/></svg>
 <svg class="abs" style="left:2040px;top:510px" width="100" height="115" viewBox="0 0 100 115">
  <circle cx="51.5" cy="68" r="36.5" fill="#cfe6fb"/>
  <ellipse cx="73" cy="91" rx="9" ry="13" fill="#141414"/>
  <path d="M39 74 Q35 95 40 104 Q55 107 70 104 Q75 92 71 74 Z" fill="#141414"/>
  <path d="M42 80 L27 73 Q21 68 19 70 Q17 72 21 75 Q16 77 22 79 Q19 83 26 82 L38 88 Z" fill="#141414"/>
  <path d="M51 13 L44 29 Q25 36 25 55 Q26 79 51 80 Q78 80 80 55 Q79 35 61 28 Z" fill="#141414"/>
  <circle cx="31.5" cy="53.5" r="7.8" fill="#fff"/><circle cx="57.5" cy="53.5" r="9.3" fill="#fff"/>
  <path d="M27.5 56 Q31.5 49.5 35.5 56" fill="none" stroke="#141414" stroke-width="1.8"/>
  <path d="M52.5 56.5 Q57.5 49.5 62.5 56.5" fill="none" stroke="#141414" stroke-width="1.8"/>
  <ellipse cx="43" cy="60.5" rx="3.6" ry="2.6" fill="#3b4bd6"/>
  <rect x="31" y="62.5" width="13" height="9.5" rx="3" fill="#fff"/>
  <path d="M48 77 L58 77 L56 82.5 L63 84 L54 97 L54.5 88 L48 86.5 Z" fill="#fff"/>
 </svg>
 <div class="t" style="left:1975px;top:632px;font-size:21px;line-height:30px;color:#80848f">真棒，待办都处理完啦<i style="font-style:normal;margin-left:3px">!</i></div>
 <div class="abs" style="left:1844px;top:667px;width:492px;height:1px;background:#ebebef"></div>
 <div class="t" style="left:2039px;top:690px;font-size:26px;line-height:32px;color:#3391f2;font-weight:500">新建待办</div>

 <!-- weekly card -->
 <div id="weekly" class="abs" style="left:1821px;top:764px;width:537px;height:300px;border-radius:22px;overflow:hidden;background:linear-gradient(165deg,#98c1f8 0%,#a3c9fb 35%,#8db7f5 60%,#78a5ee 78%,#a9cefc 100%)">
  <svg class="abs" style="left:0;top:0" width="537" height="300" viewBox="0 0 537 300">
   <defs><filter id="bl" x="-50%" y="-50%" width="200%" height="200%"><feGaussianBlur stdDeviation="28"/></filter>
   <filter id="bl2" x="-50%" y="-50%" width="200%" height="200%"><feGaussianBlur stdDeviation="40"/></filter></defs>
   <ellipse cx="10" cy="200" rx="70" ry="60" fill="#2a5bd3" filter="url(#bl)"/>
   <ellipse cx="150" cy="270" rx="190" ry="40" fill="#5f8fe6" filter="url(#bl2)" transform="rotate(12 150 270)"/>
   <ellipse cx="60" cy="120" rx="60" ry="40" fill="#b9d6fc" filter="url(#bl)" opacity="0.8"/>
   <ellipse cx="460" cy="200" rx="90" ry="90" fill="#aed0fd" filter="url(#bl2)" opacity="0.8"/>
  </svg>
  <div class="t" style="left:23px;top:22px;font-size:21px;line-height:24px;color:#4a5f82;font-weight:300;letter-spacing:-1px">一周</div>
  <div class="t" style="left:23px;top:45px;font-size:21px;line-height:24px;color:#4a5f82;font-weight:300;letter-spacing:-1px">小结</div>
  <div class="t" style="left:23px;top:69px;font-size:5px;line-height:6px;color:#3c5478;letter-spacing:2px">DingTalk</div>
  <div class="t" style="left:393px;top:23px;font-size:29px;line-height:30px;color:#fff;letter-spacing:-1.5px">2025</div>
  <div class="t" style="left:393px;top:49px;font-size:19px;line-height:24px;color:#fff;font-weight:bold;letter-spacing:-0.5px">第47周</div>
  <div class="t" style="left:459px;top:24px;font-size:20px;line-height:26px;color:#fff">周</div>
  <div class="abs" style="left:460px;top:51px;width:23px;height:1px;background:#fff"></div>
  <div class="t" style="left:459px;top:52px;font-size:15px;line-height:20px;color:#fff;font-weight:bold">Sat</div>
  <div class="t" style="left:486px;top:14px;font-size:60px;line-height:64px;color:#fff;-webkit-text-stroke:1px #fff">6</div>
  <div class="t" style="left:94px;top:96px;font-size:46px;line-height:52px;color:#fff;font-weight:900;-webkit-text-stroke:1.3px #fff;transform:scaleX(1.09);transform-origin:0 0">开启<span style="display:inline-block;width:27px;overflow:hidden;vertical-align:top"><span style="margin-left:-13px">「</span></span>一周小结<span style="display:inline-block;width:27px;overflow:hidden;vertical-align:top">」</span></div>
  <div class="t" style="left:94px;top:152px;font-size:46px;line-height:52px;color:#fff;font-weight:900;-webkit-text-stroke:1.3px #fff;transform:scaleX(1.084);transform-origin:0 0">解锁本周关键词</div>
  <div class="t" style="left:159px;top:241px;font-size:21px;line-height:30px;color:#2d4a78;font-weight:500">点击查看你的本周数据 &gt;</div>
 </div>

 <!-- all apps card -->
 <div class="card" style="left:423px;top:1090px;width:1374px;height:500px"></div>
 <div class="t" style="left:447px;top:1115px;font-size:21px;line-height:30px;font-weight:bold;color:#171a1d">全部应用</div>
  <svg class="abs" style="left:1708px;top:1116px" width="24" height="24" viewBox="0 0 24 24"><path d="M2 7 L22 7 M2 17 L22 17" stroke="#8e9096" stroke-width="2"/><circle cx="9" cy="7" r="3.6" fill="#fff" stroke="#8e9096" stroke-width="2"/><circle cx="15" cy="17" r="3.6" fill="#fff" stroke="#8e9096" stroke-width="2"/></svg>
 <div class="t" style="left:1734px;top:1114px;font-size:20px;line-height:30px;color:#8e9096">设置</div>
 <div class="tab" style="left:446px;width:177px;background:#e1efff;color:#1a7cf0">学生、教务管理</div>
 <div class="tab" style="left:636px;width:134px;">学生会管理</div>
 <div class="tab" style="left:782px;width:156px;">学校相关网站</div>
 <div class="tab" style="left:950px;width:92px;">工具箱</div>
 <div class="tab" style="left:1055px;width:156px;">智能办公硬件</div>
 <div class="tab" style="left:1223px;width:135px;">未分组应用</div>
 <div class="tab" style="left:1370px;width:138px;"><svg width="22" height="22" viewBox="0 0 22 22" style="vertical-align:-3px;margin-right:5px"><path d="M11 2 L11 20 M2 11 L20 11" stroke="#34373c" stroke-width="2.2"/></svg>新建分组</div>
 <div class="app" style="left:473.5px;top:1265px"><div class="ic" style="background:#d4ebfd"><svg width="66" height="66" viewBox="0 0 66 66"><circle cx="32.5" cy="33" r="20.3" fill="#0e80f6"/><path d="M31.6 20.5 L31.6 35.5 L41.5 35.5" fill="none" stroke="#fff" stroke-width="3.8"/></svg></div><div class="lb"><div>日常请假</div></div></div>
 <div class="app" style="left:752px;top:1265px"><div class="ic" style="background:#d3f5c1"><svg width="66" height="66" viewBox="0 0 66 66"><defs><linearGradient id="gg3" x1="0" y1="0" x2="0" y2="1"><stop offset="0" stop-color="#3cc343"/><stop offset="1" stop-color="#10a33a"/></linearGradient></defs><circle cx="32.5" cy="33" r="20.3" fill="url(#gg3)"/><path d="M31.6 20.5 L31.6 35.5 L41.5 35.5" fill="none" stroke="#fff" stroke-width="3.8"/></svg></div><div class="lb"><div>补卡申请</div></div></div>
 <div class="app" style="left:1031px;top:1265px"><div class="ic" style="background:#d4ebfd"><svg width="66" height="66" viewBox="0 0 66 66"><path d="M8.5 26 L18 16.5 Q21.5 13 25 16.5 L33 24.5 L41 16.5 Q44.5 13 48 16.5 L57.5 26 Q60.5 29.5 57.5 33 L36.5 50 Q33 53 29.5 50 L8.5 33 Q5.5 29.5 8.5 26 Z" fill="#1a78f6"/><path d="M41 16.5 Q44.5 13 48 16.5 L57.5 26 Q60.5 29.5 57.5 33 L47 42.5 L33.5 29 L29 33 Q26 35.5 23.5 33 Q21 30 23.5 27.5 Z" fill="#5ab9f8"/><path d="M37.5 36.5 L42 41 M34 40 L38.5 44.5 M30.5 43.5 L35 48" stroke="#d4ebfd" stroke-width="1.3"/></svg></div><div class="lb"><div>教室借用申<br>请</div></div></div>
 <div class="app" style="left:1311.5px;top:1265px"><div class="ic" style="background:#d3f5c1"><svg width="66" height="66" viewBox="0 0 66 66"><defs><linearGradient id="gg4" x1="0" y1="0" x2="0" y2="1"><stop offset="0" stop-color="#4cc43a"/><stop offset="1" stop-color="#0ea53a"/></linearGradient></defs><rect x="14.6" y="11.7" width="36" height="42" rx="2" fill="url(#gg4)"/><path d="M18.5 18 L46.5 18 M18.5 23 L46.5 23 M18.5 28 L30 28" stroke="#fff" stroke-width="2.2" opacity="0.9"/><circle cx="44.5" cy="45.5" r="7.3" fill="#fff"/><circle cx="44.5" cy="45.5" r="5.8" fill="#22ad3e"/><path d="M44.5 41.5 L45.6 44.3 L48.5 44.4 L46.2 46.2 L47 49 L44.5 47.4 L42 49 L42.8 46.2 L40.5 44.4 L43.4 44.3 Z" fill="#fff"/></svg></div><div class="lb"><div>学生在校证<br>明申请</div></div></div>
 <div class="app" style="left:1590px;top:1265px"><div class="ic" style="background:#d3f5c1"><svg width="66" height="66" viewBox="0 0 66 66"><defs><linearGradient id="gg4" x1="0" y1="0" x2="0" y2="1"><stop offset="0" stop-color="#4cc43a"/><stop offset="1" stop-color="#0ea53a"/></linearGradient></defs><rect x="14.6" y="11.7" width="36" height="42" rx="2" fill="url(#gg4)"/><path d="M18.5 18 L46.5 18 M18.5 23 L46.5 23 M18.5 28 L30 28" stroke="#fff" stroke-width="2.2" opacity="0.9"/><circle cx="44.5" cy="45.5" r="7.3" fill="#fff"/><circle cx="44.5" cy="45.5" r="5.8" fill="#22ad3e"/><path d="M44.5 41.5 L45.6 44.3 L48.5 44.4 L46.2 46.2 L47 49 L44.5 47.4 L42 49 L42.8 46.2 L40.5 44.4 L43.4 44.3 Z" fill="#fff"/></svg></div><div class="lb"><div>学生干部任<br>职证明申请</div></div></div>
 <div class="app" style="left:473.5px;top:1382px"><div class="ic" style="background:#d3f5c1"><svg width="66" height="66" viewBox="0 0 66 66"><defs><linearGradient id="gg4" x1="0" y1="0" x2="0" y2="1"><stop offset="0" stop-color="#4cc43a"/><stop offset="1" stop-color="#0ea53a"/></linearGradient></defs><rect x="14.6" y="11.7" width="36" height="42" rx="2" fill="url(#gg4)"/><path d="M18.5 18 L46.5 18 M18.5 23 L46.5 23 M18.5 28 L30 28" stroke="#fff" stroke-width="2.2" opacity="0.9"/><circle cx="44.5" cy="45.5" r="7.3" fill="#fff"/><circle cx="44.5" cy="45.5" r="5.8" fill="#22ad3e"/><path d="M44.5 41.5 L45.6 44.3 L48.5 44.4 L46.2 46.2 L47 49 L44.5 47.4 L42 49 L42.8 46.2 L40.5 44.4 L43.4 44.3 Z" fill="#fff"/></svg></div><div class="lb"><div>考试身份临<br>时证明申请</div></div></div>
 <div class="app" style="left:752px;top:1382px"><div class="ic" style="background:#fde5bf"><svg width="66" height="66" viewBox="0 0 66 66"><defs><linearGradient id="og3" x1="0" y1="0" x2="0" y2="1"><stop offset="0" stop-color="#f5b528"/><stop offset="1" stop-color="#fd8c00"/></linearGradient></defs><path d="M19.5 21.5 Q21.5 16.3 26 16.3 L40 16.3 Q44.5 16.3 46.5 21.5 L48 24 L54 21.5 L56 23 L53 25.5 L53 50 L46 50 L46 45 L20 45 L20 50 L12.8 50 L12.8 25.5 L10 23 L12 21.5 L18 24 Z" fill="url(#og3)"/><path d="M22 28 L24.5 22 Q25 20.5 27 20.5 L39 20.5 Q41 20.5 41.5 22 L44 28 Z" fill="#fde5bf"/><circle cx="18.5" cy="36" r="2.8" fill="#fde5bf"/><circle cx="47.5" cy="36" r="2.8" fill="#fde5bf"/></svg></div><div class="lb"><div>学生在校使<br>用<span class="ql">“</span>电瓶<span class="ell">⋯</span></div></div></div>
 <div class="app" style="left:1031px;top:1382px"><div class="ic" style="background:#fde0da"><svg width="66" height="66" viewBox="0 0 66 66"><rect x="11.5" y="14.3" width="43.4" height="3.8" rx="1.5" fill="#f4603a"/><path d="M16 18 L50.4 18 L50.4 40 Q50.4 42.7 47.7 42.7 L18.7 42.7 Q16 42.7 16 40 Z" fill="#f4603a"/><path d="M20.5 42 L20.5 47.5 M44.5 42 L44.5 47.5" stroke="#f4603a" stroke-width="3.2" stroke-linecap="round"/><path d="M19.5 36 Q23 31.5 28 32.5 Q33 33.5 38 30 Q42 27.5 47 26" fill="none" stroke="#fde0da" stroke-width="2.6" stroke-linecap="round"/></svg></div><div class="lb"><div>班会、团日<br>记录</div></div></div>
 <div class="app" style="left:1311.5px;top:1382px"><div class="ic" style="background:#d4ebfd"><svg width="66" height="66" viewBox="0 0 66 66"><defs><linearGradient id="bg2" x1="0" y1="0" x2="0" y2="1"><stop offset="0" stop-color="#2b86f6"/><stop offset="1" stop-color="#0b62f3"/></linearGradient></defs><rect x="14.6" y="12" width="36" height="41.6" rx="1.5" fill="url(#bg2)"/><path d="M19.5 19 L25 19 M19.5 26.5 L37 26.5 M19.5 31.5 L37 31.5 M19.5 36.5 L31 36.5" stroke="#fff" stroke-width="2.4" stroke-linecap="round" opacity="0.9"/></svg></div><div class="lb"><div><span class="ql">“</span>诚信考<br>试<span class="qr">”</span>承诺<span class="ell">⋯</span></div></div></div>
 <div class="app" style="left:1590px;top:1382px"><div class="ic" style="background:#d4ebfd"><svg width="66" height="66" viewBox="0 0 66 66"><path d="M8.5 26 L18 16.5 Q21.5 13 25 16.5 L33 24.5 L41 16.5 Q44.5 13 48 16.5 L57.5 26 Q60.5 29.5 57.5 33 L36.5 50 Q33 53 29.5 50 L8.5 33 Q5.5 29.5 8.5 26 Z" fill="#1a78f6"/><path d="M41 16.5 Q44.5 13 48 16.5 L57.5 26 Q60.5 29.5 57.5 33 L47 42.5 L33.5 29 L29 33 Q26 35.5 23.5 33 Q21 30 23.5 27.5 Z" fill="#5ab9f8"/><path d="M37.5 36.5 L42 41 M34 40 L38.5 44.5 M30.5 43.5 L35 48" stroke="#d4ebfd" stroke-width="1.3"/></svg></div><div class="lb"><div>学生<span class="ql">“</span>特异<br>体质<span class="qr">”</span>情<span class="ell">⋯</span></div></div></div>
</div></div>

</body>
</html>
